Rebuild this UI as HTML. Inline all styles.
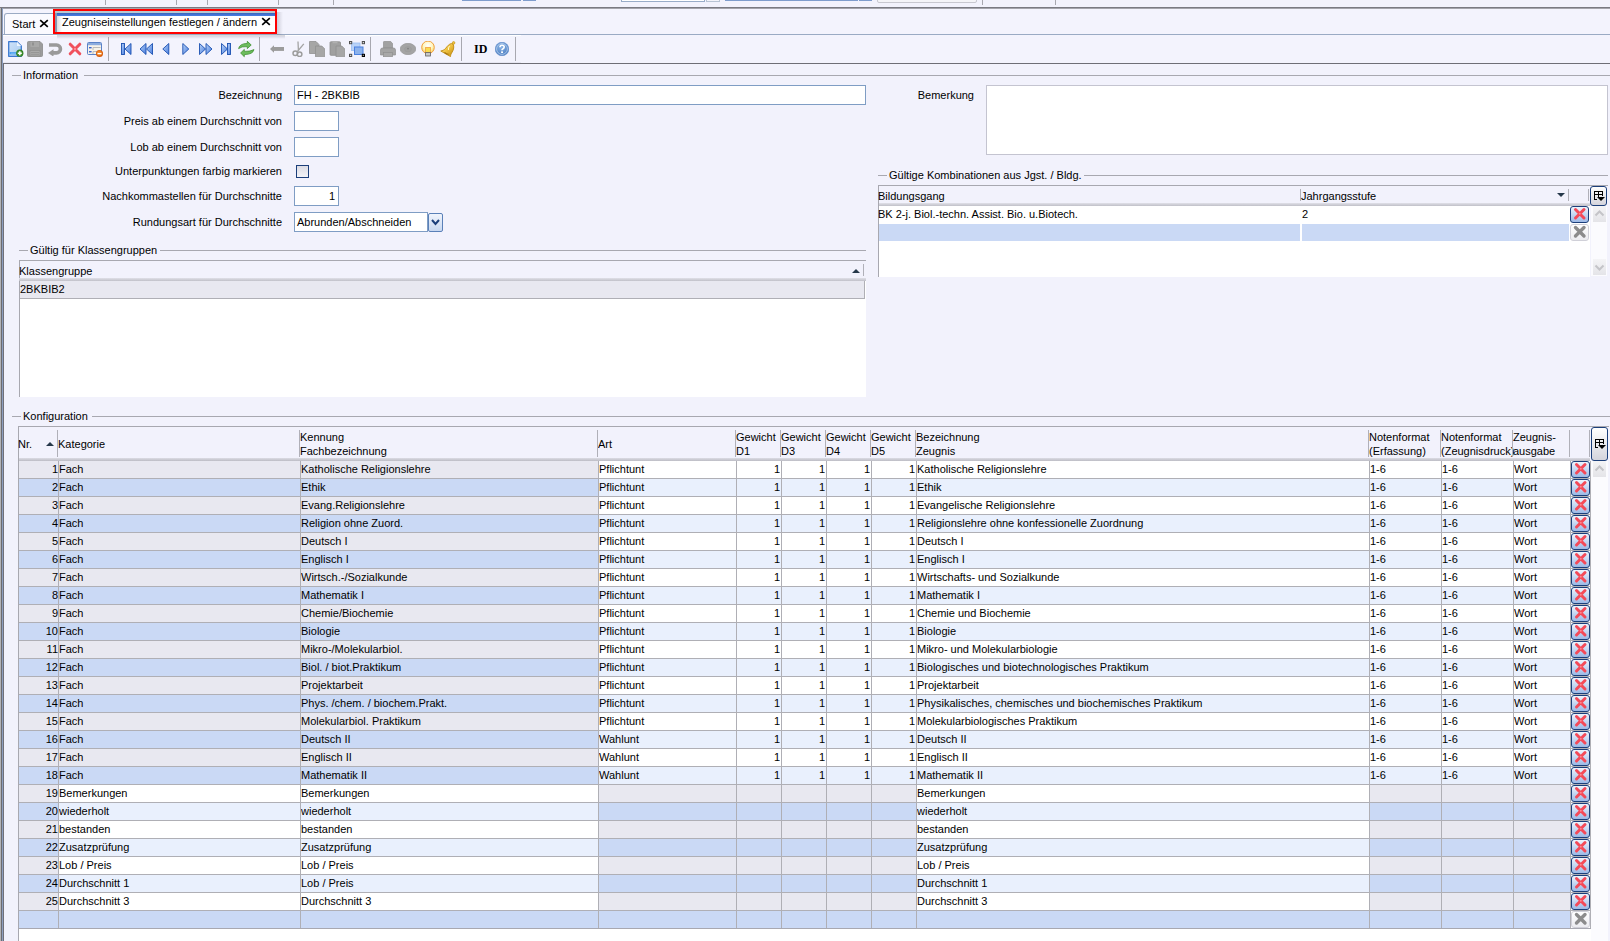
<!DOCTYPE html><html><head><meta charset="utf-8"><style>
*{box-sizing:border-box;margin:0;padding:0}
html,body{width:1610px;height:941px;overflow:hidden;background:#f2f2fc;font-family:"Liberation Sans",sans-serif;font-size:11px;color:#000}
.a{position:absolute}
.t{position:absolute;white-space:nowrap;line-height:13px}
.r{text-align:right}
.hl{position:absolute;height:1px;background:#a0a0a8}
.vl{position:absolute;width:1px}
.inp{position:absolute;background:#fff;border:1px solid #7f9dc4}
.cell{position:absolute;overflow:hidden;white-space:nowrap;line-height:17px;height:17px}
</style></head><body>
<div class="a" style="left:105px;top:0;width:1px;height:5px;background:#a8a8b0"></div>
<div class="a" style="left:176px;top:0;width:1px;height:5px;background:#a8a8b0"></div>
<div class="a" style="left:207px;top:0;width:1px;height:5px;background:#a8a8b0"></div>
<div class="a" style="left:278px;top:0;width:1px;height:5px;background:#a8a8b0"></div>
<div class="a" style="left:333px;top:0;width:1px;height:5px;background:#a8a8b0"></div>
<div class="a" style="left:982px;top:0;width:1px;height:5px;background:#a8a8b0"></div>
<div class="a" style="left:1055px;top:0;width:1px;height:5px;background:#a8a8b0"></div>
<div class="a" style="left:462px;top:0;width:59px;height:1px;background:#7e9ccc"></div>
<div class="a" style="left:523px;top:0;width:13px;height:1px;background:#7e9ccc"></div>
<div class="a" style="left:621px;top:-2px;width:84px;height:4px;border:1px solid #98acc8;background:#fff"></div>
<div class="a" style="left:706px;top:-2px;width:14px;height:4px;border:1px solid #b8c4d4;background:#f4f4fa"></div>
<div class="a" style="left:725px;top:0;width:133px;height:1px;background:#7e9ccc"></div>
<div class="a" style="left:859px;top:0;width:13px;height:1px;background:#7e9ccc"></div>
<div class="a" style="left:877px;top:-3px;width:100px;height:6px;border:1px solid #c8c8d0;border-radius:2px;background:#f4f4f8"></div>
<div class="a" style="left:0;top:7px;width:1610px;height:1px;background:#7a7a82"></div>
<div class="a" style="left:0;top:8px;width:1610px;height:1px;background:#a4a4ac"></div>
<div class="a" style="left:0;top:8px;width:1px;height:933px;background:#b4b4b8"></div>
<div class="a" style="left:1px;top:8px;width:1px;height:933px;background:#6c6c70"></div>
<div class="a" style="left:2px;top:8px;width:1px;height:933px;background:#8c9ec0"></div>
<div class="a" style="left:3px;top:9px;width:1607px;height:25px;background:#f3f3fd"></div>
<div class="a" style="left:3px;top:34px;width:1607px;height:1px;background:#9aaac4"></div>
<div class="a" style="left:4px;top:13px;width:50px;height:21px;border:1px solid #9aaac4;border-bottom:none;border-radius:3px 0 0 0;background:#fafaff"></div>
<div class="t" style="left:12px;top:18px">Start</div>
<svg class="a" style="left:39px;top:19px" width="10" height="9"><path d="M1.2 1.2 L8.8 7.8 M8.8 1.2 L1.2 7.8" stroke="#000" stroke-width="1.7"/></svg>
<div class="a" style="left:55px;top:11px;width:220px;height:21px;background:#fff"></div>
<div class="a" style="left:55px;top:11px;width:220px;height:2px;background:#b8c8d0"></div>
<div class="a" style="left:57px;top:13px;width:218px;height:3px;background:linear-gradient(#3a64b8,#4a80e8)"></div>
<div class="a" style="left:55px;top:13px;width:2px;height:19px;background:#8898b0"></div>
<div class="a" style="left:57px;top:16px;width:5px;height:16px;background:linear-gradient(90deg,#dcdce0,#ffffff)"></div>
<div class="t" style="left:62px;top:16px">Zeugniseinstellungen festlegen / ändern</div>
<svg class="a" style="left:261px;top:17px" width="10" height="9"><path d="M1.2 1.2 L8.8 7.8 M8.8 1.2 L1.2 7.8" stroke="#000" stroke-width="1.7"/></svg>
<div class="a" style="left:277px;top:12px;width:6px;height:23px;background:linear-gradient(90deg,rgba(60,60,80,0.2),rgba(60,60,80,0))"></div>
<div class="a" style="left:53px;top:9px;width:224px;height:25px;border:2px solid #ff0000"></div>
<div class="a" style="left:3px;top:35px;width:1607px;height:28px;background:#f3f3fd"></div>
<div class="a" style="left:3px;top:63px;width:1607px;height:1px;background:#6e6e76"></div>
<div class="a" style="left:3px;top:35px;width:518px;height:1px;background:#ffffff"></div>
<div class="a" style="left:3px;top:62px;width:518px;height:1px;background:#e6e6f2"></div>
<div class="a" style="left:57px;top:35px;width:228px;height:4px;background:linear-gradient(rgba(60,60,80,0.22),rgba(60,60,80,0))"></div>
<div class="a" style="left:108px;top:37px;width:1px;height:24px;background:#a8a8b0"></div>
<div class="a" style="left:259px;top:37px;width:1px;height:24px;background:#a8a8b0"></div>
<div class="a" style="left:370px;top:37px;width:1px;height:24px;background:#a8a8b0"></div>
<div class="a" style="left:461px;top:37px;width:1px;height:24px;background:#a8a8b0"></div>
<div class="a" style="left:515px;top:37px;width:1px;height:24px;background:#a8a8b0"></div>
<svg class="a" style="left:8px;top:41px" width="16" height="16" viewBox="0 0 16 16"><defs><linearGradient id="gd" x1="0" y1="0" x2="1" y2="1"><stop offset="0" stop-color="#cfe2f8"/><stop offset="1" stop-color="#a8cbf0"/></linearGradient></defs><path d="M0.7 0.7 H9 L13.3 5 V15.3 H0.7 Z" fill="url(#gd)" stroke="#3a78d0" stroke-width="1.3" stroke-linejoin="round"/><path d="M9 0.7 V5 H13.3" fill="#eef5fd" stroke="none"/><rect x="1.5" y="11" width="8" height="2.4" fill="#4aa0f0"/><path d="M3 12.2 H8" stroke="#9ad0fa" stroke-width="0.6"/><circle cx="11.8" cy="12.2" r="3.6" fill="#2f7d22"/><circle cx="11.8" cy="12.2" r="2.6" fill="#4a9a3a"/><path d="M11.8 10.2 V14.2 M9.8 12.2 H13.8" stroke="#fff" stroke-width="1.5"/></svg>
<svg class="a" style="left:27px;top:41px" width="16" height="16" viewBox="0 0 16 16"><path d="M0.5 1.5 Q0.5 0.5 1.5 0.5 H13 L15.5 3 V14.5 Q15.5 15.5 14.5 15.5 H1.5 Q0.5 15.5 0.5 14.5 Z" fill="#9c9c9c" stroke="#8a8a8a" stroke-width="0.8"/><rect x="3.5" y="0.8" width="8.5" height="5.2" fill="#a8a8a8"/><rect x="5.5" y="1.5" width="1" height="3" fill="#7a7a7a"/><rect x="3" y="9.5" width="10" height="5.5" fill="#aaaaaa" stroke="#8e8e8e" stroke-width="0.6"/><path d="M4 11.5 H12 M4 13.3 H12" stroke="#8e8e8e" stroke-width="0.7"/></svg>
<svg class="a" style="left:48px;top:40px" width="16" height="16" viewBox="0 0 16 16"><path d="M1 5 H8.5 A3.95 3.95 0 0 1 8.5 12.9 H5" stroke="#9a9a9a" stroke-width="3.6" fill="none"/><path d="M0 12.9 L5.5 9.2 V16.6 Z" fill="#9a9a9a"/></svg>
<svg class="a" style="left:68px;top:42px" width="14" height="14" viewBox="0 0 14 14"><path d="M2.2 2.2 L11.8 11.8 M11.8 2.2 L2.2 11.8" stroke="#f0505c" stroke-width="3" stroke-linecap="round"/><circle cx="7" cy="7" r="1.2" fill="#ff8a92"/></svg>
<svg class="a" style="left:87px;top:42px" width="16" height="16" viewBox="0 0 16 16"><rect x="0.5" y="0.5" width="14" height="12" rx="1" fill="#f6f2ea" stroke="#5a82c8"/><rect x="1" y="1" width="13" height="2.2" fill="#8cacde"/><rect x="2" y="5" width="2.6" height="1.4" fill="#3a64d0"/><rect x="2" y="9" width="2.6" height="1.4" fill="#3a64d0"/><path d="M6 8 V5.5 H13.5 M6 12 V9.5 H10" stroke="#b4b4b4" stroke-width="0.9" fill="none"/><circle cx="12.5" cy="11.5" r="3.5" fill="#d85a08"/><circle cx="12.3" cy="11.1" r="2.6" fill="#f08020"/><rect x="10.5" y="10.9" width="4" height="1.4" fill="#fff"/></svg>
<svg class="a" style="left:121px;top:43px" width="11" height="12" viewBox="0 0 11 12"><defs><linearGradient id="gb" x1="0" y1="0" x2="1" y2="1"><stop offset="0" stop-color="#b8d2f6"/><stop offset="1" stop-color="#4a7ee0"/></linearGradient></defs><rect x="0.5" y="0.5" width="3" height="11" fill="url(#gb)" stroke="#1a4fb0" stroke-width="0.9"/><path d="M4 6 L10 0.5 V11.5 Z" fill="url(#gb)" stroke="#1a4fb0" stroke-width="0.9" stroke-linejoin="round"/></svg>
<svg class="a" style="left:139px;top:43px" width="15" height="12" viewBox="0 0 15 12"><path d="M1 6 L7 0.5 V11.5 Z" fill="url(#gb)" stroke="#1a4fb0" stroke-width="0.9" stroke-linejoin="round"/><path d="M7.5 6 L13.5 0.5 V11.5 Z" fill="url(#gb)" stroke="#1a4fb0" stroke-width="0.9" stroke-linejoin="round"/></svg>
<svg class="a" style="left:162px;top:43px" width="8" height="12" viewBox="0 0 8 12"><path d="M0.8 6 L6.8 0.5 V11.5 Z" fill="url(#gb)" stroke="#1a4fb0" stroke-width="0.9" stroke-linejoin="round"/></svg>
<svg class="a" style="left:182px;top:43px" width="8" height="12" viewBox="0 0 8 12"><path d="M0.8 0.5 L6.8 6 L0.8 11.5 Z" fill="url(#gb)" stroke="#1a4fb0" stroke-width="0.9" stroke-linejoin="round"/></svg>
<svg class="a" style="left:199px;top:43px" width="15" height="12" viewBox="0 0 15 12"><path d="M0.5 0.5 L6.5 6 L0.5 11.5 Z" fill="url(#gb)" stroke="#1a4fb0" stroke-width="0.9" stroke-linejoin="round"/><path d="M7 0.5 L13 6 L7 11.5 Z" fill="url(#gb)" stroke="#1a4fb0" stroke-width="0.9" stroke-linejoin="round"/></svg>
<svg class="a" style="left:221px;top:43px" width="11" height="12" viewBox="0 0 11 12"><path d="M0.5 0.5 L6.5 6 L0.5 11.5 Z" fill="url(#gb)" stroke="#1a4fb0" stroke-width="0.9" stroke-linejoin="round"/><rect x="6.5" y="0.5" width="3" height="11" fill="url(#gb)" stroke="#1a4fb0" stroke-width="0.9"/></svg>
<svg class="a" style="left:238px;top:41px" width="17" height="17" viewBox="0 0 17 17"><path d="M0.6 7.6 Q1.5 2.6 9.3 2.4 L9.3 0.3 L13.2 4 L9.3 7.6 L9.3 5.6 Q3.5 5.2 0.6 7.6 Z" fill="#6cbc5c" stroke="#3f9030" stroke-width="0.8" stroke-linejoin="round"/><path d="M16 8.6 Q15 13.4 6.3 13.6 L6.3 15.7 L2.6 12 L6.3 8.4 L6.3 10.4 Q12.5 10.6 16 8.6 Z" fill="#6cbc5c" stroke="#3f9030" stroke-width="0.8" stroke-linejoin="round"/></svg>
<svg class="a" style="left:270px;top:45px" width="14" height="8" viewBox="0 0 14 8"><path d="M0 4 L4 0.2 V7.8 Z" fill="#9c9c9c"/><rect x="3.5" y="2" width="10.5" height="3.9" fill="#9c9c9c"/></svg>
<svg class="a" style="left:291px;top:41px" width="16" height="16" viewBox="0 0 16 16"><path d="M7 0.5 L7.4 9.5 M12.8 2.8 L6.4 10.5" stroke="#a4a4a4" stroke-width="1.3"/><circle cx="4.3" cy="12.3" r="2.3" stroke="#9c9c9c" stroke-width="1.5" fill="none"/><circle cx="8.6" cy="13.2" r="2.3" stroke="#9c9c9c" stroke-width="1.5" fill="none"/></svg>
<svg class="a" style="left:309px;top:41px" width="16" height="16" viewBox="0 0 16 16"><path d="M0.5 0.5 H7.0 L10.0 3.5 V12.5 H0.5 Z" fill="#a6a6a6" stroke="#909090" stroke-width="0.8" stroke-linejoin="round"/><path d="M6.5 5 H12.8 L15.8 8 V15.8 H6.5 Z" fill="#a6a6a6" stroke="#909090" stroke-width="0.8" stroke-linejoin="round"/></svg>
<svg class="a" style="left:329px;top:41px" width="16" height="16" viewBox="0 0 16 16"><path d="M1 1.5 Q1 0.8 2 0.8 H10.5 Q11.5 0.8 11.5 1.8 V13.5 Q11.5 14.3 10.5 14.3 H2 Q1 14.3 1 13.5 Z" fill="#a0a0a0" stroke="#8c8c8c" stroke-width="0.8"/><rect x="3.5" y="0.3" width="5" height="2" fill="#b0b0b0"/><path d="M7 5 H12.8 L15.8 8 V15.8 H7 Z" fill="#a6a6a6" stroke="#909090" stroke-width="0.8" stroke-linejoin="round"/></svg>
<svg class="a" style="left:349px;top:41px" width="16" height="16" viewBox="0 0 16 16"><rect x="2.5" y="2" width="8.5" height="7.5" fill="#b8d2f8" stroke="#98bcf0" stroke-width="0.8"/><rect x="5.5" y="6" width="8.5" height="7.5" fill="#8cb2ec" stroke="#4a80e0" stroke-width="1"/><g fill="#d8d8d8" stroke="#505050" stroke-width="1"><rect x="0.5" y="0.5" width="2.2" height="2.2"/><rect x="13.3" y="0.5" width="2.2" height="2.2"/><rect x="0.5" y="13.3" width="2.2" height="2.2"/></g><rect x="13.3" y="13.3" width="2.2" height="2.2" fill="#888" stroke="#000" stroke-width="1"/></svg>
<svg class="a" style="left:380px;top:41px" width="16" height="16" viewBox="0 0 16 16"><path d="M3.5 1.2 Q3.5 0.3 4.5 0.3 H10.5 L12.5 2.5 V7 H3.5 Z" fill="#a2a2a2" stroke="#909090" stroke-width="0.7"/><path d="M0.5 9 Q0.5 7 2.5 7 H13.5 Q15.5 7 15.5 9 V14 H0.5 Z" fill="#a4a4a4" stroke="#909090" stroke-width="0.7"/><rect x="3.5" y="11.5" width="9" height="4.2" fill="#a8a8a8" stroke="#909090" stroke-width="0.7"/></svg>
<svg class="a" style="left:400px;top:43px" width="16" height="12" viewBox="0 0 16 12"><ellipse cx="8" cy="6" rx="7.8" ry="5.7" fill="#a4a4a4" stroke="#909090" stroke-width="0.6"/><ellipse cx="8" cy="6.2" rx="3.5" ry="2.6" fill="#a0a0a0" stroke="#999" stroke-width="0.5"/><circle cx="8" cy="5.6" r="0.9" fill="#808080"/></svg>
<svg class="a" style="left:421px;top:41px" width="14" height="16" viewBox="0 0 14 16"><defs><radialGradient id="bl" cx="0.5" cy="0.35" r="0.6"><stop offset="0" stop-color="#ffffff"/><stop offset="0.6" stop-color="#fff6c0"/><stop offset="1" stop-color="#f6d870"/></radialGradient></defs><circle cx="7" cy="6.4" r="6.3" fill="url(#bl)" stroke="#f0a040" stroke-width="1"/><rect x="4.6" y="6.5" width="4.8" height="5" fill="#f8dc50" stroke="#f0a040" stroke-width="0.8"/><rect x="4.6" y="11.5" width="4.8" height="3.5" fill="#c8c8c8" stroke="#606060" stroke-width="0.8"/></svg>
<svg class="a" style="left:440px;top:41px" width="16" height="16" viewBox="0 0 16 16"><defs><linearGradient id="bg2" x1="0" y1="0" x2="1" y2="1"><stop offset="0" stop-color="#fbe890"/><stop offset="0.5" stop-color="#eec040"/><stop offset="1" stop-color="#c08a10"/></linearGradient></defs><path d="M11.5 2.5 C9 3 7.5 5 5.5 7.5 C4 9.2 2.5 9.5 0.8 10 L10.5 15.6 C10.5 14 11.2 12.5 12.2 11 C13.8 8.5 14.2 5.5 13.2 3.2 Z" fill="url(#bg2)" stroke="#c08a10" stroke-width="0.9" stroke-linejoin="round"/><circle cx="13.6" cy="1.9" r="1.3" fill="#f0c840" stroke="#c08a10" stroke-width="0.6"/><path d="M4.5 11.3 Q6.5 13.5 8.5 13.2" stroke="#a07010" stroke-width="1.2" fill="none"/><path d="M9.5 5 Q8 7 8.5 9" stroke="#fff8c0" stroke-width="1" fill="none"/></svg>
<div class="t" style="left:474px;top:42px;font-family:'Liberation Serif',serif;font-weight:bold;font-size:12px;line-height:14px">ID</div>
<svg class="a" style="left:495px;top:42px" width="14" height="14" viewBox="0 0 14 14"><defs><radialGradient id="hp" cx="0.45" cy="0.35" r="0.65"><stop offset="0" stop-color="#8ab4e6"/><stop offset="1" stop-color="#4a7cc0"/></radialGradient></defs><circle cx="7" cy="7" r="6.8" fill="url(#hp)" stroke="#5a88c8" stroke-width="0.6"/><circle cx="7" cy="7" r="5.4" fill="none" stroke="#c8dcf4" stroke-width="0.7"/><path d="M5 5.2 Q5 3.3 7 3.3 Q9.2 3.3 9.2 5.1 Q9.2 6.3 7.8 6.9 Q7 7.3 7 8.3" stroke="#fff" stroke-width="1.6" fill="none"/><rect x="6.1" y="9.4" width="1.9" height="1.6" fill="#fff"/></svg>
<div class="a" style="left:3px;top:64px;width:1px;height:877px;background:#707078"></div>
<div class="a" style="left:12px;top:75px;width:9px;height:1px;background:#a8a8b0"></div>
<div class="t" style="left:23px;top:69px">Information</div>
<div class="a" style="left:84px;top:75px;width:1526px;height:1px;background:#a8a8b0"></div>
<div class="t r" style="right:1328px;top:89px">Bezeichnung</div>
<div class="t r" style="right:1328px;top:115px">Preis ab einem Durchschnitt von</div>
<div class="t r" style="right:1328px;top:141px">Lob ab einem Durchschnitt von</div>
<div class="t r" style="right:1328px;top:165px">Unterpunktungen farbig markieren</div>
<div class="t r" style="right:1328px;top:190px">Nachkommastellen für Durchschnitte</div>
<div class="t r" style="right:1328px;top:216px">Rundungsart für Durchschnitte</div>
<div class="inp" style="left:294px;top:85px;width:572px;height:20px"></div>
<div class="t" style="left:297px;top:89px">FH - 2BKBIB</div>
<div class="inp" style="left:294px;top:111px;width:45px;height:20px"></div>
<div class="inp" style="left:294px;top:137px;width:45px;height:20px"></div>
<div class="a" style="left:296px;top:165px;width:13px;height:13px;border:1px solid #1c3f7a;background:linear-gradient(#dcdce4,#f4f4f8)"></div>
<div class="inp" style="left:294px;top:186px;width:45px;height:20px"></div>
<div class="t" style="left:329px;top:190px">1</div>
<div class="inp" style="left:294px;top:212px;width:134px;height:20px"></div>
<div class="t" style="left:297px;top:216px">Abrunden/Abschneiden</div>
<div class="a" style="left:428px;top:213px;width:15px;height:19px;border:1px solid #5a80b8;border-radius:2px;background:linear-gradient(#f0f4fc,#c8d8f0)"></div>
<svg class="a" style="left:430px;top:217px" width="11" height="10"><path d="M2 3 L5.5 7 L9 3" stroke="#1c3f7a" stroke-width="2" fill="none"/></svg>
<div class="t r" style="right:636px;top:89px">Bemerkung</div>
<div class="a" style="left:986px;top:85px;width:622px;height:70px;border:1px solid #c4c4d0;background:#fff"></div>
<div class="a" style="left:19px;top:250px;width:9px;height:1px;background:#a8a8b0"></div>
<div class="t" style="left:30px;top:244px">Gültig für Klassengruppen</div>
<div class="a" style="left:160px;top:250px;width:706px;height:1px;background:#a8a8b0"></div>
<div class="a" style="left:19px;top:260px;width:847px;height:137px;background:#fff"></div>
<div class="a" style="left:19px;top:260px;width:847px;height:21px;background:#f2f2fc;border-top:1px solid #a8a8b0;border-left:1px solid #a8a8b0"></div>
<div class="a" style="left:19px;top:278px;width:847px;height:3px;background:linear-gradient(#e0e0e8,#c0c0c8)"></div>
<div class="t" style="left:19px;top:265px">Klassengruppe</div>
<div class="a" style="left:863px;top:264px;width:1px;height:12px;background:#b0b0b8"></div>
<svg class="a" style="left:851px;top:268px" width="10" height="6"><path d="M1 5 L5 1 L9 5 Z" fill="#26384a"/></svg>
<div class="a" style="left:19px;top:281px;width:846px;height:18px;background:#e8e8f0;border-bottom:1px solid #afafb5;border-right:1px solid #afafb5"></div>
<div class="t" style="left:20px;top:283px">2BKBIB2</div>
<div class="a" style="left:19px;top:281px;width:1px;height:116px;background:#a8a8b0"></div>
<div class="a" style="left:878px;top:175px;width:9px;height:1px;background:#a8a8b0"></div>
<div class="t" style="left:889px;top:169px">Gültige Kombinationen aus Jgst. / Bldg.</div>
<div class="a" style="left:1084px;top:175px;width:524px;height:1px;background:#a8a8b0"></div>
<div class="a" style="left:878px;top:185px;width:712px;height:92px;background:#fff"></div>
<div class="a" style="left:878px;top:185px;width:730px;height:21px;background:#f2f2fc;border-top:1px solid #a8a8b0"></div>
<div class="a" style="left:878px;top:203px;width:712px;height:3px;background:linear-gradient(#e0e0e8,#c0c0c8)"></div>
<div class="a" style="left:878px;top:185px;width:1px;height:92px;background:#a8a8b0"></div>
<div class="t" style="left:878px;top:190px">Bildungsgang</div>
<div class="a" style="left:1300px;top:189px;width:1px;height:12px;background:#b0b0b8"></div>
<div class="t" style="left:1301px;top:190px">Jahrgangsstufe</div>
<svg class="a" style="left:1556px;top:192px" width="10" height="6"><path d="M1 1 L5 5 L9 1 Z" fill="#26384a"/></svg>
<div class="a" style="left:1568px;top:189px;width:1px;height:12px;background:#b0b0b8"></div>
<div class="a" style="left:1588px;top:189px;width:1px;height:12px;background:#b0b0b8"></div>
<div class="t" style="left:878px;top:208px">BK 2-j. Biol.-techn. Assist. Bio. u.Biotech.</div>
<div class="t" style="left:1302px;top:208px">2</div>
<div class="a" style="left:879px;top:224px;width:421px;height:17px;background:#cad9f5"></div>
<div class="a" style="left:1302px;top:224px;width:267px;height:17px;background:#cad9f5"></div>
<div class="a" style="left:1570px;top:206px;width:19px;height:17px;border:1px solid #1c3f7a;border-radius:3px;background:linear-gradient(#eef4fd,#9cb9e6)"></div><svg class="a" style="left:1570px;top:206px" width="19" height="17"><path d="M5.5 3.5 L14 12 M14 3.5 L5.5 12" stroke="#f44a58" stroke-width="3" stroke-linecap="round"/><circle cx="9.75" cy="7.75" r="1" fill="#ff8890"/></svg>
<div class="a" style="left:1570px;top:224px;width:19px;height:17px;border:1px solid #d0d0d8;border-radius:3px;background:linear-gradient(#ffffff,#ececf0)"></div><svg class="a" style="left:1570px;top:224px" width="19" height="17"><path d="M5.5 3.5 L14 12 M14 3.5 L5.5 12" stroke="#8c8c8c" stroke-width="3.4" stroke-linecap="round"/></svg>
<div class="a" style="left:1590px;top:186px;width:17px;height:20px;border:1px solid #1c3f7a;border-radius:3px;background:linear-gradient(#ffffff,#d4d4dc)"></div><svg class="a" style="left:1594px;top:191px" width="12" height="11" shape-rendering="crispEdges"><rect x="0" y="0" width="9" height="1" fill="#000"/><rect x="0" y="3" width="9" height="1" fill="#000"/><rect x="0" y="0" width="1" height="9" fill="#000"/><rect x="4" y="0" width="1" height="6" fill="#000"/><rect x="8" y="0" width="1" height="5" fill="#000"/><rect x="0" y="8" width="3" height="1" fill="#000"/><path d="M3 6 H11 L7 10 Z" fill="#000" shape-rendering="auto"/></svg>
<div class="a" style="left:1591px;top:206px;width:16px;height:70px;background:#fbfbfe"></div>
<div class="a" style="left:1593px;top:206px;width:13px;height:16px;background:linear-gradient(#f4f4f6,#e4e4e8)"></div><svg class="a" style="left:1593px;top:206px" width="13" height="16"><path d="M2.5 9.5 L6.5 5.5 L10.5 9.5" stroke="#c4c4c8" stroke-width="2" fill="none"/></svg>
<div class="a" style="left:1593px;top:259px;width:13px;height:16px;background:linear-gradient(#f4f4f6,#e4e4e8)"></div><svg class="a" style="left:1593px;top:259px" width="13" height="16"><path d="M2.5 6.5 L6.5 10.5 L10.5 6.5" stroke="#c4c4c8" stroke-width="2" fill="none"/></svg>
<div class="a" style="left:12px;top:416px;width:9px;height:1px;background:#a8a8b0"></div>
<div class="t" style="left:23px;top:410px">Konfiguration</div>
<div class="a" style="left:92px;top:416px;width:1518px;height:1px;background:#a8a8b0"></div>
<div class="a" style="left:18px;top:426px;width:1573px;height:515px;background:#fff"></div>
<div class="a" style="left:18px;top:426px;width:1573px;height:35px;background:#f2f2fc"></div>
<div class="a" style="left:18px;top:426px;width:1591px;height:1px;background:#a8a8b0"></div>
<div class="a" style="left:18px;top:458px;width:1572px;height:3px;background:linear-gradient(#dcdce4,#bcbcc4)"></div>
<div class="a" style="left:18px;top:426px;width:1px;height:515px;background:#a8a8b0"></div>
<div class="t" style="left:18px;top:438px">Nr.</div>
<div class="t" style="left:58px;top:438px">Kategorie</div>
<div class="t" style="left:300px;top:431px">Kennung</div>
<div class="t" style="left:300px;top:445px">Fachbezeichnung</div>
<div class="t" style="left:598px;top:438px">Art</div>
<div class="t" style="left:736px;top:431px">Gewicht</div>
<div class="t" style="left:736px;top:445px">D1</div>
<div class="t" style="left:781px;top:431px">Gewicht</div>
<div class="t" style="left:781px;top:445px">D3</div>
<div class="t" style="left:826px;top:431px">Gewicht</div>
<div class="t" style="left:826px;top:445px">D4</div>
<div class="t" style="left:871px;top:431px">Gewicht</div>
<div class="t" style="left:871px;top:445px">D5</div>
<div class="t" style="left:916px;top:431px">Bezeichnung</div>
<div class="t" style="left:916px;top:445px">Zeugnis</div>
<div class="t" style="left:1369px;top:431px">Notenformat</div>
<div class="t" style="left:1369px;top:445px">(Erfassung)</div>
<div class="t" style="left:1441px;top:431px">Notenformat</div>
<div class="t" style="left:1441px;top:445px">(Zeugnisdruck)</div>
<div class="t" style="left:1513px;top:431px">Zeugnis-</div>
<div class="t" style="left:1513px;top:445px">ausgabe</div>
<div class="a" style="left:57px;top:430px;width:1px;height:27px;background:#b0b0b8"></div>
<div class="a" style="left:299px;top:430px;width:1px;height:27px;background:#b0b0b8"></div>
<div class="a" style="left:597px;top:430px;width:1px;height:27px;background:#b0b0b8"></div>
<div class="a" style="left:735px;top:430px;width:1px;height:27px;background:#b0b0b8"></div>
<div class="a" style="left:780px;top:430px;width:1px;height:27px;background:#b0b0b8"></div>
<div class="a" style="left:825px;top:430px;width:1px;height:27px;background:#b0b0b8"></div>
<div class="a" style="left:870px;top:430px;width:1px;height:27px;background:#b0b0b8"></div>
<div class="a" style="left:915px;top:430px;width:1px;height:27px;background:#b0b0b8"></div>
<div class="a" style="left:1368px;top:430px;width:1px;height:27px;background:#b0b0b8"></div>
<div class="a" style="left:1440px;top:430px;width:1px;height:27px;background:#b0b0b8"></div>
<div class="a" style="left:1512px;top:430px;width:1px;height:27px;background:#b0b0b8"></div>
<div class="a" style="left:1569px;top:430px;width:1px;height:27px;background:#b0b0b8"></div>
<div class="a" style="left:1589px;top:430px;width:1px;height:27px;background:#b0b0b8"></div>
<svg class="a" style="left:45px;top:441px" width="10" height="6"><path d="M1 5 L5 1 L9 5 Z" fill="#26384a"/></svg>
<div class="a" style="left:1591px;top:427px;width:17px;height:34px;border:1px solid #1c3f7a;border-radius:3px;background:linear-gradient(#ffffff,#d4d4dc)"></div><svg class="a" style="left:1595px;top:439px" width="12" height="11" shape-rendering="crispEdges"><rect x="0" y="0" width="9" height="1" fill="#000"/><rect x="0" y="3" width="9" height="1" fill="#000"/><rect x="0" y="0" width="1" height="9" fill="#000"/><rect x="4" y="0" width="1" height="6" fill="#000"/><rect x="8" y="0" width="1" height="5" fill="#000"/><rect x="0" y="8" width="3" height="1" fill="#000"/><path d="M3 6 H11 L7 10 Z" fill="#000" shape-rendering="auto"/></svg>
<div class="a" style="left:19px;top:461px;width:39px;height:17px;background:#e8e8f0"></div>
<div class="a" style="left:59px;top:461px;width:241px;height:17px;background:#e8e8f0"></div>
<div class="a" style="left:301px;top:461px;width:297px;height:17px;background:#e8e8f0"></div>
<div class="a" style="left:599px;top:461px;width:137px;height:17px;background:#ffffff"></div>
<div class="a" style="left:737px;top:461px;width:44px;height:17px;background:#ffffff"></div>
<div class="a" style="left:782px;top:461px;width:44px;height:17px;background:#ffffff"></div>
<div class="a" style="left:827px;top:461px;width:44px;height:17px;background:#ffffff"></div>
<div class="a" style="left:872px;top:461px;width:44px;height:17px;background:#ffffff"></div>
<div class="a" style="left:917px;top:461px;width:452px;height:17px;background:#ffffff"></div>
<div class="a" style="left:1370px;top:461px;width:71px;height:17px;background:#ffffff"></div>
<div class="a" style="left:1442px;top:461px;width:71px;height:17px;background:#ffffff"></div>
<div class="a" style="left:1514px;top:461px;width:56px;height:17px;background:#ffffff"></div>
<div class="a" style="left:19px;top:478px;width:1571px;height:1px;background:#afafb5"></div>
<div class="cell r" style="left:19px;top:461px;width:39px">1</div>
<div class="cell" style="left:59px;top:461px;width:239px">Fach</div>
<div class="cell" style="left:301px;top:461px;width:295px">Katholische Religionslehre</div>
<div class="cell" style="left:599px;top:461px;width:135px">Pflichtunt</div>
<div class="cell r" style="left:741px;top:461px;width:39px">1</div>
<div class="cell r" style="left:786px;top:461px;width:39px">1</div>
<div class="cell r" style="left:831px;top:461px;width:39px">1</div>
<div class="cell r" style="left:876px;top:461px;width:39px">1</div>
<div class="cell" style="left:1370px;top:461px;width:69px">1-6</div>
<div class="cell" style="left:1442px;top:461px;width:69px">1-6</div>
<div class="cell" style="left:1514px;top:461px;width:55px">Wort</div>
<div class="cell" style="left:917px;top:461px;width:450px">Katholische Religionslehre</div>
<div class="a" style="left:1571px;top:461px;width:19px;height:17px;border:1px solid #1c3f7a;border-radius:3px;background:linear-gradient(#eef4fd,#9cb9e6)"></div><svg class="a" style="left:1571px;top:461px" width="19" height="17"><path d="M5.5 3.5 L14 12 M14 3.5 L5.5 12" stroke="#f44a58" stroke-width="3" stroke-linecap="round"/><circle cx="9.75" cy="7.75" r="1" fill="#ff8890"/></svg>
<div class="a" style="left:19px;top:479px;width:39px;height:17px;background:#cad9f5"></div>
<div class="a" style="left:59px;top:479px;width:241px;height:17px;background:#cad9f5"></div>
<div class="a" style="left:301px;top:479px;width:297px;height:17px;background:#cad9f5"></div>
<div class="a" style="left:599px;top:479px;width:137px;height:17px;background:#e9f0fd"></div>
<div class="a" style="left:737px;top:479px;width:44px;height:17px;background:#e9f0fd"></div>
<div class="a" style="left:782px;top:479px;width:44px;height:17px;background:#e9f0fd"></div>
<div class="a" style="left:827px;top:479px;width:44px;height:17px;background:#e9f0fd"></div>
<div class="a" style="left:872px;top:479px;width:44px;height:17px;background:#e9f0fd"></div>
<div class="a" style="left:917px;top:479px;width:452px;height:17px;background:#e9f0fd"></div>
<div class="a" style="left:1370px;top:479px;width:71px;height:17px;background:#e9f0fd"></div>
<div class="a" style="left:1442px;top:479px;width:71px;height:17px;background:#e9f0fd"></div>
<div class="a" style="left:1514px;top:479px;width:56px;height:17px;background:#e9f0fd"></div>
<div class="a" style="left:19px;top:496px;width:1571px;height:1px;background:#afafb5"></div>
<div class="cell r" style="left:19px;top:479px;width:39px">2</div>
<div class="cell" style="left:59px;top:479px;width:239px">Fach</div>
<div class="cell" style="left:301px;top:479px;width:295px">Ethik</div>
<div class="cell" style="left:599px;top:479px;width:135px">Pflichtunt</div>
<div class="cell r" style="left:741px;top:479px;width:39px">1</div>
<div class="cell r" style="left:786px;top:479px;width:39px">1</div>
<div class="cell r" style="left:831px;top:479px;width:39px">1</div>
<div class="cell r" style="left:876px;top:479px;width:39px">1</div>
<div class="cell" style="left:1370px;top:479px;width:69px">1-6</div>
<div class="cell" style="left:1442px;top:479px;width:69px">1-6</div>
<div class="cell" style="left:1514px;top:479px;width:55px">Wort</div>
<div class="cell" style="left:917px;top:479px;width:450px">Ethik</div>
<div class="a" style="left:1571px;top:479px;width:19px;height:17px;border:1px solid #1c3f7a;border-radius:3px;background:linear-gradient(#eef4fd,#9cb9e6)"></div><svg class="a" style="left:1571px;top:479px" width="19" height="17"><path d="M5.5 3.5 L14 12 M14 3.5 L5.5 12" stroke="#f44a58" stroke-width="3" stroke-linecap="round"/><circle cx="9.75" cy="7.75" r="1" fill="#ff8890"/></svg>
<div class="a" style="left:19px;top:497px;width:39px;height:17px;background:#e8e8f0"></div>
<div class="a" style="left:59px;top:497px;width:241px;height:17px;background:#e8e8f0"></div>
<div class="a" style="left:301px;top:497px;width:297px;height:17px;background:#e8e8f0"></div>
<div class="a" style="left:599px;top:497px;width:137px;height:17px;background:#ffffff"></div>
<div class="a" style="left:737px;top:497px;width:44px;height:17px;background:#ffffff"></div>
<div class="a" style="left:782px;top:497px;width:44px;height:17px;background:#ffffff"></div>
<div class="a" style="left:827px;top:497px;width:44px;height:17px;background:#ffffff"></div>
<div class="a" style="left:872px;top:497px;width:44px;height:17px;background:#ffffff"></div>
<div class="a" style="left:917px;top:497px;width:452px;height:17px;background:#ffffff"></div>
<div class="a" style="left:1370px;top:497px;width:71px;height:17px;background:#ffffff"></div>
<div class="a" style="left:1442px;top:497px;width:71px;height:17px;background:#ffffff"></div>
<div class="a" style="left:1514px;top:497px;width:56px;height:17px;background:#ffffff"></div>
<div class="a" style="left:19px;top:514px;width:1571px;height:1px;background:#afafb5"></div>
<div class="cell r" style="left:19px;top:497px;width:39px">3</div>
<div class="cell" style="left:59px;top:497px;width:239px">Fach</div>
<div class="cell" style="left:301px;top:497px;width:295px">Evang.Religionslehre</div>
<div class="cell" style="left:599px;top:497px;width:135px">Pflichtunt</div>
<div class="cell r" style="left:741px;top:497px;width:39px">1</div>
<div class="cell r" style="left:786px;top:497px;width:39px">1</div>
<div class="cell r" style="left:831px;top:497px;width:39px">1</div>
<div class="cell r" style="left:876px;top:497px;width:39px">1</div>
<div class="cell" style="left:1370px;top:497px;width:69px">1-6</div>
<div class="cell" style="left:1442px;top:497px;width:69px">1-6</div>
<div class="cell" style="left:1514px;top:497px;width:55px">Wort</div>
<div class="cell" style="left:917px;top:497px;width:450px">Evangelische Religionslehre</div>
<div class="a" style="left:1571px;top:497px;width:19px;height:17px;border:1px solid #1c3f7a;border-radius:3px;background:linear-gradient(#eef4fd,#9cb9e6)"></div><svg class="a" style="left:1571px;top:497px" width="19" height="17"><path d="M5.5 3.5 L14 12 M14 3.5 L5.5 12" stroke="#f44a58" stroke-width="3" stroke-linecap="round"/><circle cx="9.75" cy="7.75" r="1" fill="#ff8890"/></svg>
<div class="a" style="left:19px;top:515px;width:39px;height:17px;background:#cad9f5"></div>
<div class="a" style="left:59px;top:515px;width:241px;height:17px;background:#cad9f5"></div>
<div class="a" style="left:301px;top:515px;width:297px;height:17px;background:#cad9f5"></div>
<div class="a" style="left:599px;top:515px;width:137px;height:17px;background:#e9f0fd"></div>
<div class="a" style="left:737px;top:515px;width:44px;height:17px;background:#e9f0fd"></div>
<div class="a" style="left:782px;top:515px;width:44px;height:17px;background:#e9f0fd"></div>
<div class="a" style="left:827px;top:515px;width:44px;height:17px;background:#e9f0fd"></div>
<div class="a" style="left:872px;top:515px;width:44px;height:17px;background:#e9f0fd"></div>
<div class="a" style="left:917px;top:515px;width:452px;height:17px;background:#e9f0fd"></div>
<div class="a" style="left:1370px;top:515px;width:71px;height:17px;background:#e9f0fd"></div>
<div class="a" style="left:1442px;top:515px;width:71px;height:17px;background:#e9f0fd"></div>
<div class="a" style="left:1514px;top:515px;width:56px;height:17px;background:#e9f0fd"></div>
<div class="a" style="left:19px;top:532px;width:1571px;height:1px;background:#afafb5"></div>
<div class="cell r" style="left:19px;top:515px;width:39px">4</div>
<div class="cell" style="left:59px;top:515px;width:239px">Fach</div>
<div class="cell" style="left:301px;top:515px;width:295px">Religion ohne Zuord.</div>
<div class="cell" style="left:599px;top:515px;width:135px">Pflichtunt</div>
<div class="cell r" style="left:741px;top:515px;width:39px">1</div>
<div class="cell r" style="left:786px;top:515px;width:39px">1</div>
<div class="cell r" style="left:831px;top:515px;width:39px">1</div>
<div class="cell r" style="left:876px;top:515px;width:39px">1</div>
<div class="cell" style="left:1370px;top:515px;width:69px">1-6</div>
<div class="cell" style="left:1442px;top:515px;width:69px">1-6</div>
<div class="cell" style="left:1514px;top:515px;width:55px">Wort</div>
<div class="cell" style="left:917px;top:515px;width:450px">Religionslehre ohne konfessionelle Zuordnung</div>
<div class="a" style="left:1571px;top:515px;width:19px;height:17px;border:1px solid #1c3f7a;border-radius:3px;background:linear-gradient(#eef4fd,#9cb9e6)"></div><svg class="a" style="left:1571px;top:515px" width="19" height="17"><path d="M5.5 3.5 L14 12 M14 3.5 L5.5 12" stroke="#f44a58" stroke-width="3" stroke-linecap="round"/><circle cx="9.75" cy="7.75" r="1" fill="#ff8890"/></svg>
<div class="a" style="left:19px;top:533px;width:39px;height:17px;background:#e8e8f0"></div>
<div class="a" style="left:59px;top:533px;width:241px;height:17px;background:#e8e8f0"></div>
<div class="a" style="left:301px;top:533px;width:297px;height:17px;background:#e8e8f0"></div>
<div class="a" style="left:599px;top:533px;width:137px;height:17px;background:#ffffff"></div>
<div class="a" style="left:737px;top:533px;width:44px;height:17px;background:#ffffff"></div>
<div class="a" style="left:782px;top:533px;width:44px;height:17px;background:#ffffff"></div>
<div class="a" style="left:827px;top:533px;width:44px;height:17px;background:#ffffff"></div>
<div class="a" style="left:872px;top:533px;width:44px;height:17px;background:#ffffff"></div>
<div class="a" style="left:917px;top:533px;width:452px;height:17px;background:#ffffff"></div>
<div class="a" style="left:1370px;top:533px;width:71px;height:17px;background:#ffffff"></div>
<div class="a" style="left:1442px;top:533px;width:71px;height:17px;background:#ffffff"></div>
<div class="a" style="left:1514px;top:533px;width:56px;height:17px;background:#ffffff"></div>
<div class="a" style="left:19px;top:550px;width:1571px;height:1px;background:#afafb5"></div>
<div class="cell r" style="left:19px;top:533px;width:39px">5</div>
<div class="cell" style="left:59px;top:533px;width:239px">Fach</div>
<div class="cell" style="left:301px;top:533px;width:295px">Deutsch I</div>
<div class="cell" style="left:599px;top:533px;width:135px">Pflichtunt</div>
<div class="cell r" style="left:741px;top:533px;width:39px">1</div>
<div class="cell r" style="left:786px;top:533px;width:39px">1</div>
<div class="cell r" style="left:831px;top:533px;width:39px">1</div>
<div class="cell r" style="left:876px;top:533px;width:39px">1</div>
<div class="cell" style="left:1370px;top:533px;width:69px">1-6</div>
<div class="cell" style="left:1442px;top:533px;width:69px">1-6</div>
<div class="cell" style="left:1514px;top:533px;width:55px">Wort</div>
<div class="cell" style="left:917px;top:533px;width:450px">Deutsch I</div>
<div class="a" style="left:1571px;top:533px;width:19px;height:17px;border:1px solid #1c3f7a;border-radius:3px;background:linear-gradient(#eef4fd,#9cb9e6)"></div><svg class="a" style="left:1571px;top:533px" width="19" height="17"><path d="M5.5 3.5 L14 12 M14 3.5 L5.5 12" stroke="#f44a58" stroke-width="3" stroke-linecap="round"/><circle cx="9.75" cy="7.75" r="1" fill="#ff8890"/></svg>
<div class="a" style="left:19px;top:551px;width:39px;height:17px;background:#cad9f5"></div>
<div class="a" style="left:59px;top:551px;width:241px;height:17px;background:#cad9f5"></div>
<div class="a" style="left:301px;top:551px;width:297px;height:17px;background:#cad9f5"></div>
<div class="a" style="left:599px;top:551px;width:137px;height:17px;background:#e9f0fd"></div>
<div class="a" style="left:737px;top:551px;width:44px;height:17px;background:#e9f0fd"></div>
<div class="a" style="left:782px;top:551px;width:44px;height:17px;background:#e9f0fd"></div>
<div class="a" style="left:827px;top:551px;width:44px;height:17px;background:#e9f0fd"></div>
<div class="a" style="left:872px;top:551px;width:44px;height:17px;background:#e9f0fd"></div>
<div class="a" style="left:917px;top:551px;width:452px;height:17px;background:#e9f0fd"></div>
<div class="a" style="left:1370px;top:551px;width:71px;height:17px;background:#e9f0fd"></div>
<div class="a" style="left:1442px;top:551px;width:71px;height:17px;background:#e9f0fd"></div>
<div class="a" style="left:1514px;top:551px;width:56px;height:17px;background:#e9f0fd"></div>
<div class="a" style="left:19px;top:568px;width:1571px;height:1px;background:#afafb5"></div>
<div class="cell r" style="left:19px;top:551px;width:39px">6</div>
<div class="cell" style="left:59px;top:551px;width:239px">Fach</div>
<div class="cell" style="left:301px;top:551px;width:295px">Englisch I</div>
<div class="cell" style="left:599px;top:551px;width:135px">Pflichtunt</div>
<div class="cell r" style="left:741px;top:551px;width:39px">1</div>
<div class="cell r" style="left:786px;top:551px;width:39px">1</div>
<div class="cell r" style="left:831px;top:551px;width:39px">1</div>
<div class="cell r" style="left:876px;top:551px;width:39px">1</div>
<div class="cell" style="left:1370px;top:551px;width:69px">1-6</div>
<div class="cell" style="left:1442px;top:551px;width:69px">1-6</div>
<div class="cell" style="left:1514px;top:551px;width:55px">Wort</div>
<div class="cell" style="left:917px;top:551px;width:450px">Englisch I</div>
<div class="a" style="left:1571px;top:551px;width:19px;height:17px;border:1px solid #1c3f7a;border-radius:3px;background:linear-gradient(#eef4fd,#9cb9e6)"></div><svg class="a" style="left:1571px;top:551px" width="19" height="17"><path d="M5.5 3.5 L14 12 M14 3.5 L5.5 12" stroke="#f44a58" stroke-width="3" stroke-linecap="round"/><circle cx="9.75" cy="7.75" r="1" fill="#ff8890"/></svg>
<div class="a" style="left:19px;top:569px;width:39px;height:17px;background:#e8e8f0"></div>
<div class="a" style="left:59px;top:569px;width:241px;height:17px;background:#e8e8f0"></div>
<div class="a" style="left:301px;top:569px;width:297px;height:17px;background:#e8e8f0"></div>
<div class="a" style="left:599px;top:569px;width:137px;height:17px;background:#ffffff"></div>
<div class="a" style="left:737px;top:569px;width:44px;height:17px;background:#ffffff"></div>
<div class="a" style="left:782px;top:569px;width:44px;height:17px;background:#ffffff"></div>
<div class="a" style="left:827px;top:569px;width:44px;height:17px;background:#ffffff"></div>
<div class="a" style="left:872px;top:569px;width:44px;height:17px;background:#ffffff"></div>
<div class="a" style="left:917px;top:569px;width:452px;height:17px;background:#ffffff"></div>
<div class="a" style="left:1370px;top:569px;width:71px;height:17px;background:#ffffff"></div>
<div class="a" style="left:1442px;top:569px;width:71px;height:17px;background:#ffffff"></div>
<div class="a" style="left:1514px;top:569px;width:56px;height:17px;background:#ffffff"></div>
<div class="a" style="left:19px;top:586px;width:1571px;height:1px;background:#afafb5"></div>
<div class="cell r" style="left:19px;top:569px;width:39px">7</div>
<div class="cell" style="left:59px;top:569px;width:239px">Fach</div>
<div class="cell" style="left:301px;top:569px;width:295px">Wirtsch.-/Sozialkunde</div>
<div class="cell" style="left:599px;top:569px;width:135px">Pflichtunt</div>
<div class="cell r" style="left:741px;top:569px;width:39px">1</div>
<div class="cell r" style="left:786px;top:569px;width:39px">1</div>
<div class="cell r" style="left:831px;top:569px;width:39px">1</div>
<div class="cell r" style="left:876px;top:569px;width:39px">1</div>
<div class="cell" style="left:1370px;top:569px;width:69px">1-6</div>
<div class="cell" style="left:1442px;top:569px;width:69px">1-6</div>
<div class="cell" style="left:1514px;top:569px;width:55px">Wort</div>
<div class="cell" style="left:917px;top:569px;width:450px">Wirtschafts- und Sozialkunde</div>
<div class="a" style="left:1571px;top:569px;width:19px;height:17px;border:1px solid #1c3f7a;border-radius:3px;background:linear-gradient(#eef4fd,#9cb9e6)"></div><svg class="a" style="left:1571px;top:569px" width="19" height="17"><path d="M5.5 3.5 L14 12 M14 3.5 L5.5 12" stroke="#f44a58" stroke-width="3" stroke-linecap="round"/><circle cx="9.75" cy="7.75" r="1" fill="#ff8890"/></svg>
<div class="a" style="left:19px;top:587px;width:39px;height:17px;background:#cad9f5"></div>
<div class="a" style="left:59px;top:587px;width:241px;height:17px;background:#cad9f5"></div>
<div class="a" style="left:301px;top:587px;width:297px;height:17px;background:#cad9f5"></div>
<div class="a" style="left:599px;top:587px;width:137px;height:17px;background:#e9f0fd"></div>
<div class="a" style="left:737px;top:587px;width:44px;height:17px;background:#e9f0fd"></div>
<div class="a" style="left:782px;top:587px;width:44px;height:17px;background:#e9f0fd"></div>
<div class="a" style="left:827px;top:587px;width:44px;height:17px;background:#e9f0fd"></div>
<div class="a" style="left:872px;top:587px;width:44px;height:17px;background:#e9f0fd"></div>
<div class="a" style="left:917px;top:587px;width:452px;height:17px;background:#e9f0fd"></div>
<div class="a" style="left:1370px;top:587px;width:71px;height:17px;background:#e9f0fd"></div>
<div class="a" style="left:1442px;top:587px;width:71px;height:17px;background:#e9f0fd"></div>
<div class="a" style="left:1514px;top:587px;width:56px;height:17px;background:#e9f0fd"></div>
<div class="a" style="left:19px;top:604px;width:1571px;height:1px;background:#afafb5"></div>
<div class="cell r" style="left:19px;top:587px;width:39px">8</div>
<div class="cell" style="left:59px;top:587px;width:239px">Fach</div>
<div class="cell" style="left:301px;top:587px;width:295px">Mathematik I</div>
<div class="cell" style="left:599px;top:587px;width:135px">Pflichtunt</div>
<div class="cell r" style="left:741px;top:587px;width:39px">1</div>
<div class="cell r" style="left:786px;top:587px;width:39px">1</div>
<div class="cell r" style="left:831px;top:587px;width:39px">1</div>
<div class="cell r" style="left:876px;top:587px;width:39px">1</div>
<div class="cell" style="left:1370px;top:587px;width:69px">1-6</div>
<div class="cell" style="left:1442px;top:587px;width:69px">1-6</div>
<div class="cell" style="left:1514px;top:587px;width:55px">Wort</div>
<div class="cell" style="left:917px;top:587px;width:450px">Mathematik I</div>
<div class="a" style="left:1571px;top:587px;width:19px;height:17px;border:1px solid #1c3f7a;border-radius:3px;background:linear-gradient(#eef4fd,#9cb9e6)"></div><svg class="a" style="left:1571px;top:587px" width="19" height="17"><path d="M5.5 3.5 L14 12 M14 3.5 L5.5 12" stroke="#f44a58" stroke-width="3" stroke-linecap="round"/><circle cx="9.75" cy="7.75" r="1" fill="#ff8890"/></svg>
<div class="a" style="left:19px;top:605px;width:39px;height:17px;background:#e8e8f0"></div>
<div class="a" style="left:59px;top:605px;width:241px;height:17px;background:#e8e8f0"></div>
<div class="a" style="left:301px;top:605px;width:297px;height:17px;background:#e8e8f0"></div>
<div class="a" style="left:599px;top:605px;width:137px;height:17px;background:#ffffff"></div>
<div class="a" style="left:737px;top:605px;width:44px;height:17px;background:#ffffff"></div>
<div class="a" style="left:782px;top:605px;width:44px;height:17px;background:#ffffff"></div>
<div class="a" style="left:827px;top:605px;width:44px;height:17px;background:#ffffff"></div>
<div class="a" style="left:872px;top:605px;width:44px;height:17px;background:#ffffff"></div>
<div class="a" style="left:917px;top:605px;width:452px;height:17px;background:#ffffff"></div>
<div class="a" style="left:1370px;top:605px;width:71px;height:17px;background:#ffffff"></div>
<div class="a" style="left:1442px;top:605px;width:71px;height:17px;background:#ffffff"></div>
<div class="a" style="left:1514px;top:605px;width:56px;height:17px;background:#ffffff"></div>
<div class="a" style="left:19px;top:622px;width:1571px;height:1px;background:#afafb5"></div>
<div class="cell r" style="left:19px;top:605px;width:39px">9</div>
<div class="cell" style="left:59px;top:605px;width:239px">Fach</div>
<div class="cell" style="left:301px;top:605px;width:295px">Chemie/Biochemie</div>
<div class="cell" style="left:599px;top:605px;width:135px">Pflichtunt</div>
<div class="cell r" style="left:741px;top:605px;width:39px">1</div>
<div class="cell r" style="left:786px;top:605px;width:39px">1</div>
<div class="cell r" style="left:831px;top:605px;width:39px">1</div>
<div class="cell r" style="left:876px;top:605px;width:39px">1</div>
<div class="cell" style="left:1370px;top:605px;width:69px">1-6</div>
<div class="cell" style="left:1442px;top:605px;width:69px">1-6</div>
<div class="cell" style="left:1514px;top:605px;width:55px">Wort</div>
<div class="cell" style="left:917px;top:605px;width:450px">Chemie und Biochemie</div>
<div class="a" style="left:1571px;top:605px;width:19px;height:17px;border:1px solid #1c3f7a;border-radius:3px;background:linear-gradient(#eef4fd,#9cb9e6)"></div><svg class="a" style="left:1571px;top:605px" width="19" height="17"><path d="M5.5 3.5 L14 12 M14 3.5 L5.5 12" stroke="#f44a58" stroke-width="3" stroke-linecap="round"/><circle cx="9.75" cy="7.75" r="1" fill="#ff8890"/></svg>
<div class="a" style="left:19px;top:623px;width:39px;height:17px;background:#cad9f5"></div>
<div class="a" style="left:59px;top:623px;width:241px;height:17px;background:#cad9f5"></div>
<div class="a" style="left:301px;top:623px;width:297px;height:17px;background:#cad9f5"></div>
<div class="a" style="left:599px;top:623px;width:137px;height:17px;background:#e9f0fd"></div>
<div class="a" style="left:737px;top:623px;width:44px;height:17px;background:#e9f0fd"></div>
<div class="a" style="left:782px;top:623px;width:44px;height:17px;background:#e9f0fd"></div>
<div class="a" style="left:827px;top:623px;width:44px;height:17px;background:#e9f0fd"></div>
<div class="a" style="left:872px;top:623px;width:44px;height:17px;background:#e9f0fd"></div>
<div class="a" style="left:917px;top:623px;width:452px;height:17px;background:#e9f0fd"></div>
<div class="a" style="left:1370px;top:623px;width:71px;height:17px;background:#e9f0fd"></div>
<div class="a" style="left:1442px;top:623px;width:71px;height:17px;background:#e9f0fd"></div>
<div class="a" style="left:1514px;top:623px;width:56px;height:17px;background:#e9f0fd"></div>
<div class="a" style="left:19px;top:640px;width:1571px;height:1px;background:#afafb5"></div>
<div class="cell r" style="left:19px;top:623px;width:39px">10</div>
<div class="cell" style="left:59px;top:623px;width:239px">Fach</div>
<div class="cell" style="left:301px;top:623px;width:295px">Biologie</div>
<div class="cell" style="left:599px;top:623px;width:135px">Pflichtunt</div>
<div class="cell r" style="left:741px;top:623px;width:39px">1</div>
<div class="cell r" style="left:786px;top:623px;width:39px">1</div>
<div class="cell r" style="left:831px;top:623px;width:39px">1</div>
<div class="cell r" style="left:876px;top:623px;width:39px">1</div>
<div class="cell" style="left:1370px;top:623px;width:69px">1-6</div>
<div class="cell" style="left:1442px;top:623px;width:69px">1-6</div>
<div class="cell" style="left:1514px;top:623px;width:55px">Wort</div>
<div class="cell" style="left:917px;top:623px;width:450px">Biologie</div>
<div class="a" style="left:1571px;top:623px;width:19px;height:17px;border:1px solid #1c3f7a;border-radius:3px;background:linear-gradient(#eef4fd,#9cb9e6)"></div><svg class="a" style="left:1571px;top:623px" width="19" height="17"><path d="M5.5 3.5 L14 12 M14 3.5 L5.5 12" stroke="#f44a58" stroke-width="3" stroke-linecap="round"/><circle cx="9.75" cy="7.75" r="1" fill="#ff8890"/></svg>
<div class="a" style="left:19px;top:641px;width:39px;height:17px;background:#e8e8f0"></div>
<div class="a" style="left:59px;top:641px;width:241px;height:17px;background:#e8e8f0"></div>
<div class="a" style="left:301px;top:641px;width:297px;height:17px;background:#e8e8f0"></div>
<div class="a" style="left:599px;top:641px;width:137px;height:17px;background:#ffffff"></div>
<div class="a" style="left:737px;top:641px;width:44px;height:17px;background:#ffffff"></div>
<div class="a" style="left:782px;top:641px;width:44px;height:17px;background:#ffffff"></div>
<div class="a" style="left:827px;top:641px;width:44px;height:17px;background:#ffffff"></div>
<div class="a" style="left:872px;top:641px;width:44px;height:17px;background:#ffffff"></div>
<div class="a" style="left:917px;top:641px;width:452px;height:17px;background:#ffffff"></div>
<div class="a" style="left:1370px;top:641px;width:71px;height:17px;background:#ffffff"></div>
<div class="a" style="left:1442px;top:641px;width:71px;height:17px;background:#ffffff"></div>
<div class="a" style="left:1514px;top:641px;width:56px;height:17px;background:#ffffff"></div>
<div class="a" style="left:19px;top:658px;width:1571px;height:1px;background:#afafb5"></div>
<div class="cell r" style="left:19px;top:641px;width:39px">11</div>
<div class="cell" style="left:59px;top:641px;width:239px">Fach</div>
<div class="cell" style="left:301px;top:641px;width:295px">Mikro-/Molekularbiol.</div>
<div class="cell" style="left:599px;top:641px;width:135px">Pflichtunt</div>
<div class="cell r" style="left:741px;top:641px;width:39px">1</div>
<div class="cell r" style="left:786px;top:641px;width:39px">1</div>
<div class="cell r" style="left:831px;top:641px;width:39px">1</div>
<div class="cell r" style="left:876px;top:641px;width:39px">1</div>
<div class="cell" style="left:1370px;top:641px;width:69px">1-6</div>
<div class="cell" style="left:1442px;top:641px;width:69px">1-6</div>
<div class="cell" style="left:1514px;top:641px;width:55px">Wort</div>
<div class="cell" style="left:917px;top:641px;width:450px">Mikro- und Molekularbiologie</div>
<div class="a" style="left:1571px;top:641px;width:19px;height:17px;border:1px solid #1c3f7a;border-radius:3px;background:linear-gradient(#eef4fd,#9cb9e6)"></div><svg class="a" style="left:1571px;top:641px" width="19" height="17"><path d="M5.5 3.5 L14 12 M14 3.5 L5.5 12" stroke="#f44a58" stroke-width="3" stroke-linecap="round"/><circle cx="9.75" cy="7.75" r="1" fill="#ff8890"/></svg>
<div class="a" style="left:19px;top:659px;width:39px;height:17px;background:#cad9f5"></div>
<div class="a" style="left:59px;top:659px;width:241px;height:17px;background:#cad9f5"></div>
<div class="a" style="left:301px;top:659px;width:297px;height:17px;background:#cad9f5"></div>
<div class="a" style="left:599px;top:659px;width:137px;height:17px;background:#e9f0fd"></div>
<div class="a" style="left:737px;top:659px;width:44px;height:17px;background:#e9f0fd"></div>
<div class="a" style="left:782px;top:659px;width:44px;height:17px;background:#e9f0fd"></div>
<div class="a" style="left:827px;top:659px;width:44px;height:17px;background:#e9f0fd"></div>
<div class="a" style="left:872px;top:659px;width:44px;height:17px;background:#e9f0fd"></div>
<div class="a" style="left:917px;top:659px;width:452px;height:17px;background:#e9f0fd"></div>
<div class="a" style="left:1370px;top:659px;width:71px;height:17px;background:#e9f0fd"></div>
<div class="a" style="left:1442px;top:659px;width:71px;height:17px;background:#e9f0fd"></div>
<div class="a" style="left:1514px;top:659px;width:56px;height:17px;background:#e9f0fd"></div>
<div class="a" style="left:19px;top:676px;width:1571px;height:1px;background:#afafb5"></div>
<div class="cell r" style="left:19px;top:659px;width:39px">12</div>
<div class="cell" style="left:59px;top:659px;width:239px">Fach</div>
<div class="cell" style="left:301px;top:659px;width:295px">Biol. / biot.Praktikum</div>
<div class="cell" style="left:599px;top:659px;width:135px">Pflichtunt</div>
<div class="cell r" style="left:741px;top:659px;width:39px">1</div>
<div class="cell r" style="left:786px;top:659px;width:39px">1</div>
<div class="cell r" style="left:831px;top:659px;width:39px">1</div>
<div class="cell r" style="left:876px;top:659px;width:39px">1</div>
<div class="cell" style="left:1370px;top:659px;width:69px">1-6</div>
<div class="cell" style="left:1442px;top:659px;width:69px">1-6</div>
<div class="cell" style="left:1514px;top:659px;width:55px">Wort</div>
<div class="cell" style="left:917px;top:659px;width:450px">Biologisches und biotechnologisches Praktikum</div>
<div class="a" style="left:1571px;top:659px;width:19px;height:17px;border:1px solid #1c3f7a;border-radius:3px;background:linear-gradient(#eef4fd,#9cb9e6)"></div><svg class="a" style="left:1571px;top:659px" width="19" height="17"><path d="M5.5 3.5 L14 12 M14 3.5 L5.5 12" stroke="#f44a58" stroke-width="3" stroke-linecap="round"/><circle cx="9.75" cy="7.75" r="1" fill="#ff8890"/></svg>
<div class="a" style="left:19px;top:677px;width:39px;height:17px;background:#e8e8f0"></div>
<div class="a" style="left:59px;top:677px;width:241px;height:17px;background:#e8e8f0"></div>
<div class="a" style="left:301px;top:677px;width:297px;height:17px;background:#e8e8f0"></div>
<div class="a" style="left:599px;top:677px;width:137px;height:17px;background:#ffffff"></div>
<div class="a" style="left:737px;top:677px;width:44px;height:17px;background:#ffffff"></div>
<div class="a" style="left:782px;top:677px;width:44px;height:17px;background:#ffffff"></div>
<div class="a" style="left:827px;top:677px;width:44px;height:17px;background:#ffffff"></div>
<div class="a" style="left:872px;top:677px;width:44px;height:17px;background:#ffffff"></div>
<div class="a" style="left:917px;top:677px;width:452px;height:17px;background:#ffffff"></div>
<div class="a" style="left:1370px;top:677px;width:71px;height:17px;background:#ffffff"></div>
<div class="a" style="left:1442px;top:677px;width:71px;height:17px;background:#ffffff"></div>
<div class="a" style="left:1514px;top:677px;width:56px;height:17px;background:#ffffff"></div>
<div class="a" style="left:19px;top:694px;width:1571px;height:1px;background:#afafb5"></div>
<div class="cell r" style="left:19px;top:677px;width:39px">13</div>
<div class="cell" style="left:59px;top:677px;width:239px">Fach</div>
<div class="cell" style="left:301px;top:677px;width:295px">Projektarbeit</div>
<div class="cell" style="left:599px;top:677px;width:135px">Pflichtunt</div>
<div class="cell r" style="left:741px;top:677px;width:39px">1</div>
<div class="cell r" style="left:786px;top:677px;width:39px">1</div>
<div class="cell r" style="left:831px;top:677px;width:39px">1</div>
<div class="cell r" style="left:876px;top:677px;width:39px">1</div>
<div class="cell" style="left:1370px;top:677px;width:69px">1-6</div>
<div class="cell" style="left:1442px;top:677px;width:69px">1-6</div>
<div class="cell" style="left:1514px;top:677px;width:55px">Wort</div>
<div class="cell" style="left:917px;top:677px;width:450px">Projektarbeit</div>
<div class="a" style="left:1571px;top:677px;width:19px;height:17px;border:1px solid #1c3f7a;border-radius:3px;background:linear-gradient(#eef4fd,#9cb9e6)"></div><svg class="a" style="left:1571px;top:677px" width="19" height="17"><path d="M5.5 3.5 L14 12 M14 3.5 L5.5 12" stroke="#f44a58" stroke-width="3" stroke-linecap="round"/><circle cx="9.75" cy="7.75" r="1" fill="#ff8890"/></svg>
<div class="a" style="left:19px;top:695px;width:39px;height:17px;background:#cad9f5"></div>
<div class="a" style="left:59px;top:695px;width:241px;height:17px;background:#cad9f5"></div>
<div class="a" style="left:301px;top:695px;width:297px;height:17px;background:#cad9f5"></div>
<div class="a" style="left:599px;top:695px;width:137px;height:17px;background:#e9f0fd"></div>
<div class="a" style="left:737px;top:695px;width:44px;height:17px;background:#e9f0fd"></div>
<div class="a" style="left:782px;top:695px;width:44px;height:17px;background:#e9f0fd"></div>
<div class="a" style="left:827px;top:695px;width:44px;height:17px;background:#e9f0fd"></div>
<div class="a" style="left:872px;top:695px;width:44px;height:17px;background:#e9f0fd"></div>
<div class="a" style="left:917px;top:695px;width:452px;height:17px;background:#e9f0fd"></div>
<div class="a" style="left:1370px;top:695px;width:71px;height:17px;background:#e9f0fd"></div>
<div class="a" style="left:1442px;top:695px;width:71px;height:17px;background:#e9f0fd"></div>
<div class="a" style="left:1514px;top:695px;width:56px;height:17px;background:#e9f0fd"></div>
<div class="a" style="left:19px;top:712px;width:1571px;height:1px;background:#afafb5"></div>
<div class="cell r" style="left:19px;top:695px;width:39px">14</div>
<div class="cell" style="left:59px;top:695px;width:239px">Fach</div>
<div class="cell" style="left:301px;top:695px;width:295px">Phys. /chem. / biochem.Prakt.</div>
<div class="cell" style="left:599px;top:695px;width:135px">Pflichtunt</div>
<div class="cell r" style="left:741px;top:695px;width:39px">1</div>
<div class="cell r" style="left:786px;top:695px;width:39px">1</div>
<div class="cell r" style="left:831px;top:695px;width:39px">1</div>
<div class="cell r" style="left:876px;top:695px;width:39px">1</div>
<div class="cell" style="left:1370px;top:695px;width:69px">1-6</div>
<div class="cell" style="left:1442px;top:695px;width:69px">1-6</div>
<div class="cell" style="left:1514px;top:695px;width:55px">Wort</div>
<div class="cell" style="left:917px;top:695px;width:450px">Physikalisches, chemisches und biochemisches Praktikum</div>
<div class="a" style="left:1571px;top:695px;width:19px;height:17px;border:1px solid #1c3f7a;border-radius:3px;background:linear-gradient(#eef4fd,#9cb9e6)"></div><svg class="a" style="left:1571px;top:695px" width="19" height="17"><path d="M5.5 3.5 L14 12 M14 3.5 L5.5 12" stroke="#f44a58" stroke-width="3" stroke-linecap="round"/><circle cx="9.75" cy="7.75" r="1" fill="#ff8890"/></svg>
<div class="a" style="left:19px;top:713px;width:39px;height:17px;background:#e8e8f0"></div>
<div class="a" style="left:59px;top:713px;width:241px;height:17px;background:#e8e8f0"></div>
<div class="a" style="left:301px;top:713px;width:297px;height:17px;background:#e8e8f0"></div>
<div class="a" style="left:599px;top:713px;width:137px;height:17px;background:#ffffff"></div>
<div class="a" style="left:737px;top:713px;width:44px;height:17px;background:#ffffff"></div>
<div class="a" style="left:782px;top:713px;width:44px;height:17px;background:#ffffff"></div>
<div class="a" style="left:827px;top:713px;width:44px;height:17px;background:#ffffff"></div>
<div class="a" style="left:872px;top:713px;width:44px;height:17px;background:#ffffff"></div>
<div class="a" style="left:917px;top:713px;width:452px;height:17px;background:#ffffff"></div>
<div class="a" style="left:1370px;top:713px;width:71px;height:17px;background:#ffffff"></div>
<div class="a" style="left:1442px;top:713px;width:71px;height:17px;background:#ffffff"></div>
<div class="a" style="left:1514px;top:713px;width:56px;height:17px;background:#ffffff"></div>
<div class="a" style="left:19px;top:730px;width:1571px;height:1px;background:#afafb5"></div>
<div class="cell r" style="left:19px;top:713px;width:39px">15</div>
<div class="cell" style="left:59px;top:713px;width:239px">Fach</div>
<div class="cell" style="left:301px;top:713px;width:295px">Molekularbiol. Praktikum</div>
<div class="cell" style="left:599px;top:713px;width:135px">Pflichtunt</div>
<div class="cell r" style="left:741px;top:713px;width:39px">1</div>
<div class="cell r" style="left:786px;top:713px;width:39px">1</div>
<div class="cell r" style="left:831px;top:713px;width:39px">1</div>
<div class="cell r" style="left:876px;top:713px;width:39px">1</div>
<div class="cell" style="left:1370px;top:713px;width:69px">1-6</div>
<div class="cell" style="left:1442px;top:713px;width:69px">1-6</div>
<div class="cell" style="left:1514px;top:713px;width:55px">Wort</div>
<div class="cell" style="left:917px;top:713px;width:450px">Molekularbiologisches Praktikum</div>
<div class="a" style="left:1571px;top:713px;width:19px;height:17px;border:1px solid #1c3f7a;border-radius:3px;background:linear-gradient(#eef4fd,#9cb9e6)"></div><svg class="a" style="left:1571px;top:713px" width="19" height="17"><path d="M5.5 3.5 L14 12 M14 3.5 L5.5 12" stroke="#f44a58" stroke-width="3" stroke-linecap="round"/><circle cx="9.75" cy="7.75" r="1" fill="#ff8890"/></svg>
<div class="a" style="left:19px;top:731px;width:39px;height:17px;background:#cad9f5"></div>
<div class="a" style="left:59px;top:731px;width:241px;height:17px;background:#cad9f5"></div>
<div class="a" style="left:301px;top:731px;width:297px;height:17px;background:#cad9f5"></div>
<div class="a" style="left:599px;top:731px;width:137px;height:17px;background:#e9f0fd"></div>
<div class="a" style="left:737px;top:731px;width:44px;height:17px;background:#e9f0fd"></div>
<div class="a" style="left:782px;top:731px;width:44px;height:17px;background:#e9f0fd"></div>
<div class="a" style="left:827px;top:731px;width:44px;height:17px;background:#e9f0fd"></div>
<div class="a" style="left:872px;top:731px;width:44px;height:17px;background:#e9f0fd"></div>
<div class="a" style="left:917px;top:731px;width:452px;height:17px;background:#e9f0fd"></div>
<div class="a" style="left:1370px;top:731px;width:71px;height:17px;background:#e9f0fd"></div>
<div class="a" style="left:1442px;top:731px;width:71px;height:17px;background:#e9f0fd"></div>
<div class="a" style="left:1514px;top:731px;width:56px;height:17px;background:#e9f0fd"></div>
<div class="a" style="left:19px;top:748px;width:1571px;height:1px;background:#afafb5"></div>
<div class="cell r" style="left:19px;top:731px;width:39px">16</div>
<div class="cell" style="left:59px;top:731px;width:239px">Fach</div>
<div class="cell" style="left:301px;top:731px;width:295px">Deutsch II</div>
<div class="cell" style="left:599px;top:731px;width:135px">Wahlunt</div>
<div class="cell r" style="left:741px;top:731px;width:39px">1</div>
<div class="cell r" style="left:786px;top:731px;width:39px">1</div>
<div class="cell r" style="left:831px;top:731px;width:39px">1</div>
<div class="cell r" style="left:876px;top:731px;width:39px">1</div>
<div class="cell" style="left:1370px;top:731px;width:69px">1-6</div>
<div class="cell" style="left:1442px;top:731px;width:69px">1-6</div>
<div class="cell" style="left:1514px;top:731px;width:55px">Wort</div>
<div class="cell" style="left:917px;top:731px;width:450px">Deutsch II</div>
<div class="a" style="left:1571px;top:731px;width:19px;height:17px;border:1px solid #1c3f7a;border-radius:3px;background:linear-gradient(#eef4fd,#9cb9e6)"></div><svg class="a" style="left:1571px;top:731px" width="19" height="17"><path d="M5.5 3.5 L14 12 M14 3.5 L5.5 12" stroke="#f44a58" stroke-width="3" stroke-linecap="round"/><circle cx="9.75" cy="7.75" r="1" fill="#ff8890"/></svg>
<div class="a" style="left:19px;top:749px;width:39px;height:17px;background:#e8e8f0"></div>
<div class="a" style="left:59px;top:749px;width:241px;height:17px;background:#e8e8f0"></div>
<div class="a" style="left:301px;top:749px;width:297px;height:17px;background:#e8e8f0"></div>
<div class="a" style="left:599px;top:749px;width:137px;height:17px;background:#ffffff"></div>
<div class="a" style="left:737px;top:749px;width:44px;height:17px;background:#ffffff"></div>
<div class="a" style="left:782px;top:749px;width:44px;height:17px;background:#ffffff"></div>
<div class="a" style="left:827px;top:749px;width:44px;height:17px;background:#ffffff"></div>
<div class="a" style="left:872px;top:749px;width:44px;height:17px;background:#ffffff"></div>
<div class="a" style="left:917px;top:749px;width:452px;height:17px;background:#ffffff"></div>
<div class="a" style="left:1370px;top:749px;width:71px;height:17px;background:#ffffff"></div>
<div class="a" style="left:1442px;top:749px;width:71px;height:17px;background:#ffffff"></div>
<div class="a" style="left:1514px;top:749px;width:56px;height:17px;background:#ffffff"></div>
<div class="a" style="left:19px;top:766px;width:1571px;height:1px;background:#afafb5"></div>
<div class="cell r" style="left:19px;top:749px;width:39px">17</div>
<div class="cell" style="left:59px;top:749px;width:239px">Fach</div>
<div class="cell" style="left:301px;top:749px;width:295px">Englisch II</div>
<div class="cell" style="left:599px;top:749px;width:135px">Wahlunt</div>
<div class="cell r" style="left:741px;top:749px;width:39px">1</div>
<div class="cell r" style="left:786px;top:749px;width:39px">1</div>
<div class="cell r" style="left:831px;top:749px;width:39px">1</div>
<div class="cell r" style="left:876px;top:749px;width:39px">1</div>
<div class="cell" style="left:1370px;top:749px;width:69px">1-6</div>
<div class="cell" style="left:1442px;top:749px;width:69px">1-6</div>
<div class="cell" style="left:1514px;top:749px;width:55px">Wort</div>
<div class="cell" style="left:917px;top:749px;width:450px">Englisch II</div>
<div class="a" style="left:1571px;top:749px;width:19px;height:17px;border:1px solid #1c3f7a;border-radius:3px;background:linear-gradient(#eef4fd,#9cb9e6)"></div><svg class="a" style="left:1571px;top:749px" width="19" height="17"><path d="M5.5 3.5 L14 12 M14 3.5 L5.5 12" stroke="#f44a58" stroke-width="3" stroke-linecap="round"/><circle cx="9.75" cy="7.75" r="1" fill="#ff8890"/></svg>
<div class="a" style="left:19px;top:767px;width:39px;height:17px;background:#cad9f5"></div>
<div class="a" style="left:59px;top:767px;width:241px;height:17px;background:#cad9f5"></div>
<div class="a" style="left:301px;top:767px;width:297px;height:17px;background:#cad9f5"></div>
<div class="a" style="left:599px;top:767px;width:137px;height:17px;background:#e9f0fd"></div>
<div class="a" style="left:737px;top:767px;width:44px;height:17px;background:#e9f0fd"></div>
<div class="a" style="left:782px;top:767px;width:44px;height:17px;background:#e9f0fd"></div>
<div class="a" style="left:827px;top:767px;width:44px;height:17px;background:#e9f0fd"></div>
<div class="a" style="left:872px;top:767px;width:44px;height:17px;background:#e9f0fd"></div>
<div class="a" style="left:917px;top:767px;width:452px;height:17px;background:#e9f0fd"></div>
<div class="a" style="left:1370px;top:767px;width:71px;height:17px;background:#e9f0fd"></div>
<div class="a" style="left:1442px;top:767px;width:71px;height:17px;background:#e9f0fd"></div>
<div class="a" style="left:1514px;top:767px;width:56px;height:17px;background:#e9f0fd"></div>
<div class="a" style="left:19px;top:784px;width:1571px;height:1px;background:#afafb5"></div>
<div class="cell r" style="left:19px;top:767px;width:39px">18</div>
<div class="cell" style="left:59px;top:767px;width:239px">Fach</div>
<div class="cell" style="left:301px;top:767px;width:295px">Mathematik II</div>
<div class="cell" style="left:599px;top:767px;width:135px">Wahlunt</div>
<div class="cell r" style="left:741px;top:767px;width:39px">1</div>
<div class="cell r" style="left:786px;top:767px;width:39px">1</div>
<div class="cell r" style="left:831px;top:767px;width:39px">1</div>
<div class="cell r" style="left:876px;top:767px;width:39px">1</div>
<div class="cell" style="left:1370px;top:767px;width:69px">1-6</div>
<div class="cell" style="left:1442px;top:767px;width:69px">1-6</div>
<div class="cell" style="left:1514px;top:767px;width:55px">Wort</div>
<div class="cell" style="left:917px;top:767px;width:450px">Mathematik II</div>
<div class="a" style="left:1571px;top:767px;width:19px;height:17px;border:1px solid #1c3f7a;border-radius:3px;background:linear-gradient(#eef4fd,#9cb9e6)"></div><svg class="a" style="left:1571px;top:767px" width="19" height="17"><path d="M5.5 3.5 L14 12 M14 3.5 L5.5 12" stroke="#f44a58" stroke-width="3" stroke-linecap="round"/><circle cx="9.75" cy="7.75" r="1" fill="#ff8890"/></svg>
<div class="a" style="left:19px;top:785px;width:39px;height:17px;background:#e8e8f0"></div>
<div class="a" style="left:59px;top:785px;width:241px;height:17px;background:#ffffff"></div>
<div class="a" style="left:301px;top:785px;width:297px;height:17px;background:#ffffff"></div>
<div class="a" style="left:599px;top:785px;width:137px;height:17px;background:#e8e8f0"></div>
<div class="a" style="left:737px;top:785px;width:44px;height:17px;background:#e8e8f0"></div>
<div class="a" style="left:782px;top:785px;width:44px;height:17px;background:#e8e8f0"></div>
<div class="a" style="left:827px;top:785px;width:44px;height:17px;background:#e8e8f0"></div>
<div class="a" style="left:872px;top:785px;width:44px;height:17px;background:#e8e8f0"></div>
<div class="a" style="left:917px;top:785px;width:452px;height:17px;background:#ffffff"></div>
<div class="a" style="left:1370px;top:785px;width:71px;height:17px;background:#e8e8f0"></div>
<div class="a" style="left:1442px;top:785px;width:71px;height:17px;background:#e8e8f0"></div>
<div class="a" style="left:1514px;top:785px;width:56px;height:17px;background:#e8e8f0"></div>
<div class="a" style="left:19px;top:802px;width:1571px;height:1px;background:#afafb5"></div>
<div class="cell r" style="left:19px;top:785px;width:39px">19</div>
<div class="cell" style="left:59px;top:785px;width:239px">Bemerkungen</div>
<div class="cell" style="left:301px;top:785px;width:295px">Bemerkungen</div>
<div class="cell" style="left:599px;top:785px;width:135px"></div>
<div class="cell" style="left:917px;top:785px;width:450px">Bemerkungen</div>
<div class="a" style="left:1571px;top:785px;width:19px;height:17px;border:1px solid #1c3f7a;border-radius:3px;background:linear-gradient(#eef4fd,#9cb9e6)"></div><svg class="a" style="left:1571px;top:785px" width="19" height="17"><path d="M5.5 3.5 L14 12 M14 3.5 L5.5 12" stroke="#f44a58" stroke-width="3" stroke-linecap="round"/><circle cx="9.75" cy="7.75" r="1" fill="#ff8890"/></svg>
<div class="a" style="left:19px;top:803px;width:39px;height:17px;background:#cad9f5"></div>
<div class="a" style="left:59px;top:803px;width:241px;height:17px;background:#e9f0fd"></div>
<div class="a" style="left:301px;top:803px;width:297px;height:17px;background:#e9f0fd"></div>
<div class="a" style="left:599px;top:803px;width:137px;height:17px;background:#cad9f5"></div>
<div class="a" style="left:737px;top:803px;width:44px;height:17px;background:#cad9f5"></div>
<div class="a" style="left:782px;top:803px;width:44px;height:17px;background:#cad9f5"></div>
<div class="a" style="left:827px;top:803px;width:44px;height:17px;background:#cad9f5"></div>
<div class="a" style="left:872px;top:803px;width:44px;height:17px;background:#cad9f5"></div>
<div class="a" style="left:917px;top:803px;width:452px;height:17px;background:#e9f0fd"></div>
<div class="a" style="left:1370px;top:803px;width:71px;height:17px;background:#cad9f5"></div>
<div class="a" style="left:1442px;top:803px;width:71px;height:17px;background:#cad9f5"></div>
<div class="a" style="left:1514px;top:803px;width:56px;height:17px;background:#cad9f5"></div>
<div class="a" style="left:19px;top:820px;width:1571px;height:1px;background:#afafb5"></div>
<div class="cell r" style="left:19px;top:803px;width:39px">20</div>
<div class="cell" style="left:59px;top:803px;width:239px">wiederholt</div>
<div class="cell" style="left:301px;top:803px;width:295px">wiederholt</div>
<div class="cell" style="left:599px;top:803px;width:135px"></div>
<div class="cell" style="left:917px;top:803px;width:450px">wiederholt</div>
<div class="a" style="left:1571px;top:803px;width:19px;height:17px;border:1px solid #1c3f7a;border-radius:3px;background:linear-gradient(#eef4fd,#9cb9e6)"></div><svg class="a" style="left:1571px;top:803px" width="19" height="17"><path d="M5.5 3.5 L14 12 M14 3.5 L5.5 12" stroke="#f44a58" stroke-width="3" stroke-linecap="round"/><circle cx="9.75" cy="7.75" r="1" fill="#ff8890"/></svg>
<div class="a" style="left:19px;top:821px;width:39px;height:17px;background:#e8e8f0"></div>
<div class="a" style="left:59px;top:821px;width:241px;height:17px;background:#ffffff"></div>
<div class="a" style="left:301px;top:821px;width:297px;height:17px;background:#ffffff"></div>
<div class="a" style="left:599px;top:821px;width:137px;height:17px;background:#e8e8f0"></div>
<div class="a" style="left:737px;top:821px;width:44px;height:17px;background:#e8e8f0"></div>
<div class="a" style="left:782px;top:821px;width:44px;height:17px;background:#e8e8f0"></div>
<div class="a" style="left:827px;top:821px;width:44px;height:17px;background:#e8e8f0"></div>
<div class="a" style="left:872px;top:821px;width:44px;height:17px;background:#e8e8f0"></div>
<div class="a" style="left:917px;top:821px;width:452px;height:17px;background:#ffffff"></div>
<div class="a" style="left:1370px;top:821px;width:71px;height:17px;background:#e8e8f0"></div>
<div class="a" style="left:1442px;top:821px;width:71px;height:17px;background:#e8e8f0"></div>
<div class="a" style="left:1514px;top:821px;width:56px;height:17px;background:#e8e8f0"></div>
<div class="a" style="left:19px;top:838px;width:1571px;height:1px;background:#afafb5"></div>
<div class="cell r" style="left:19px;top:821px;width:39px">21</div>
<div class="cell" style="left:59px;top:821px;width:239px">bestanden</div>
<div class="cell" style="left:301px;top:821px;width:295px">bestanden</div>
<div class="cell" style="left:599px;top:821px;width:135px"></div>
<div class="cell" style="left:917px;top:821px;width:450px">bestanden</div>
<div class="a" style="left:1571px;top:821px;width:19px;height:17px;border:1px solid #1c3f7a;border-radius:3px;background:linear-gradient(#eef4fd,#9cb9e6)"></div><svg class="a" style="left:1571px;top:821px" width="19" height="17"><path d="M5.5 3.5 L14 12 M14 3.5 L5.5 12" stroke="#f44a58" stroke-width="3" stroke-linecap="round"/><circle cx="9.75" cy="7.75" r="1" fill="#ff8890"/></svg>
<div class="a" style="left:19px;top:839px;width:39px;height:17px;background:#cad9f5"></div>
<div class="a" style="left:59px;top:839px;width:241px;height:17px;background:#e9f0fd"></div>
<div class="a" style="left:301px;top:839px;width:297px;height:17px;background:#e9f0fd"></div>
<div class="a" style="left:599px;top:839px;width:137px;height:17px;background:#cad9f5"></div>
<div class="a" style="left:737px;top:839px;width:44px;height:17px;background:#cad9f5"></div>
<div class="a" style="left:782px;top:839px;width:44px;height:17px;background:#cad9f5"></div>
<div class="a" style="left:827px;top:839px;width:44px;height:17px;background:#cad9f5"></div>
<div class="a" style="left:872px;top:839px;width:44px;height:17px;background:#cad9f5"></div>
<div class="a" style="left:917px;top:839px;width:452px;height:17px;background:#e9f0fd"></div>
<div class="a" style="left:1370px;top:839px;width:71px;height:17px;background:#cad9f5"></div>
<div class="a" style="left:1442px;top:839px;width:71px;height:17px;background:#cad9f5"></div>
<div class="a" style="left:1514px;top:839px;width:56px;height:17px;background:#cad9f5"></div>
<div class="a" style="left:19px;top:856px;width:1571px;height:1px;background:#afafb5"></div>
<div class="cell r" style="left:19px;top:839px;width:39px">22</div>
<div class="cell" style="left:59px;top:839px;width:239px">Zusatzprüfung</div>
<div class="cell" style="left:301px;top:839px;width:295px">Zusatzprüfung</div>
<div class="cell" style="left:599px;top:839px;width:135px"></div>
<div class="cell" style="left:917px;top:839px;width:450px">Zusatzprüfung</div>
<div class="a" style="left:1571px;top:839px;width:19px;height:17px;border:1px solid #1c3f7a;border-radius:3px;background:linear-gradient(#eef4fd,#9cb9e6)"></div><svg class="a" style="left:1571px;top:839px" width="19" height="17"><path d="M5.5 3.5 L14 12 M14 3.5 L5.5 12" stroke="#f44a58" stroke-width="3" stroke-linecap="round"/><circle cx="9.75" cy="7.75" r="1" fill="#ff8890"/></svg>
<div class="a" style="left:19px;top:857px;width:39px;height:17px;background:#e8e8f0"></div>
<div class="a" style="left:59px;top:857px;width:241px;height:17px;background:#ffffff"></div>
<div class="a" style="left:301px;top:857px;width:297px;height:17px;background:#ffffff"></div>
<div class="a" style="left:599px;top:857px;width:137px;height:17px;background:#e8e8f0"></div>
<div class="a" style="left:737px;top:857px;width:44px;height:17px;background:#e8e8f0"></div>
<div class="a" style="left:782px;top:857px;width:44px;height:17px;background:#e8e8f0"></div>
<div class="a" style="left:827px;top:857px;width:44px;height:17px;background:#e8e8f0"></div>
<div class="a" style="left:872px;top:857px;width:44px;height:17px;background:#e8e8f0"></div>
<div class="a" style="left:917px;top:857px;width:452px;height:17px;background:#ffffff"></div>
<div class="a" style="left:1370px;top:857px;width:71px;height:17px;background:#e8e8f0"></div>
<div class="a" style="left:1442px;top:857px;width:71px;height:17px;background:#e8e8f0"></div>
<div class="a" style="left:1514px;top:857px;width:56px;height:17px;background:#e8e8f0"></div>
<div class="a" style="left:19px;top:874px;width:1571px;height:1px;background:#afafb5"></div>
<div class="cell r" style="left:19px;top:857px;width:39px">23</div>
<div class="cell" style="left:59px;top:857px;width:239px">Lob / Preis</div>
<div class="cell" style="left:301px;top:857px;width:295px">Lob / Preis</div>
<div class="cell" style="left:599px;top:857px;width:135px"></div>
<div class="cell" style="left:917px;top:857px;width:450px">Lob / Preis</div>
<div class="a" style="left:1571px;top:857px;width:19px;height:17px;border:1px solid #1c3f7a;border-radius:3px;background:linear-gradient(#eef4fd,#9cb9e6)"></div><svg class="a" style="left:1571px;top:857px" width="19" height="17"><path d="M5.5 3.5 L14 12 M14 3.5 L5.5 12" stroke="#f44a58" stroke-width="3" stroke-linecap="round"/><circle cx="9.75" cy="7.75" r="1" fill="#ff8890"/></svg>
<div class="a" style="left:19px;top:875px;width:39px;height:17px;background:#cad9f5"></div>
<div class="a" style="left:59px;top:875px;width:241px;height:17px;background:#e9f0fd"></div>
<div class="a" style="left:301px;top:875px;width:297px;height:17px;background:#e9f0fd"></div>
<div class="a" style="left:599px;top:875px;width:137px;height:17px;background:#cad9f5"></div>
<div class="a" style="left:737px;top:875px;width:44px;height:17px;background:#cad9f5"></div>
<div class="a" style="left:782px;top:875px;width:44px;height:17px;background:#cad9f5"></div>
<div class="a" style="left:827px;top:875px;width:44px;height:17px;background:#cad9f5"></div>
<div class="a" style="left:872px;top:875px;width:44px;height:17px;background:#cad9f5"></div>
<div class="a" style="left:917px;top:875px;width:452px;height:17px;background:#e9f0fd"></div>
<div class="a" style="left:1370px;top:875px;width:71px;height:17px;background:#cad9f5"></div>
<div class="a" style="left:1442px;top:875px;width:71px;height:17px;background:#cad9f5"></div>
<div class="a" style="left:1514px;top:875px;width:56px;height:17px;background:#cad9f5"></div>
<div class="a" style="left:19px;top:892px;width:1571px;height:1px;background:#afafb5"></div>
<div class="cell r" style="left:19px;top:875px;width:39px">24</div>
<div class="cell" style="left:59px;top:875px;width:239px">Durchschnitt 1</div>
<div class="cell" style="left:301px;top:875px;width:295px">Lob / Preis</div>
<div class="cell" style="left:599px;top:875px;width:135px"></div>
<div class="cell" style="left:917px;top:875px;width:450px">Durchschnitt 1</div>
<div class="a" style="left:1571px;top:875px;width:19px;height:17px;border:1px solid #1c3f7a;border-radius:3px;background:linear-gradient(#eef4fd,#9cb9e6)"></div><svg class="a" style="left:1571px;top:875px" width="19" height="17"><path d="M5.5 3.5 L14 12 M14 3.5 L5.5 12" stroke="#f44a58" stroke-width="3" stroke-linecap="round"/><circle cx="9.75" cy="7.75" r="1" fill="#ff8890"/></svg>
<div class="a" style="left:19px;top:893px;width:39px;height:17px;background:#e8e8f0"></div>
<div class="a" style="left:59px;top:893px;width:241px;height:17px;background:#ffffff"></div>
<div class="a" style="left:301px;top:893px;width:297px;height:17px;background:#ffffff"></div>
<div class="a" style="left:599px;top:893px;width:137px;height:17px;background:#e8e8f0"></div>
<div class="a" style="left:737px;top:893px;width:44px;height:17px;background:#e8e8f0"></div>
<div class="a" style="left:782px;top:893px;width:44px;height:17px;background:#e8e8f0"></div>
<div class="a" style="left:827px;top:893px;width:44px;height:17px;background:#e8e8f0"></div>
<div class="a" style="left:872px;top:893px;width:44px;height:17px;background:#e8e8f0"></div>
<div class="a" style="left:917px;top:893px;width:452px;height:17px;background:#ffffff"></div>
<div class="a" style="left:1370px;top:893px;width:71px;height:17px;background:#e8e8f0"></div>
<div class="a" style="left:1442px;top:893px;width:71px;height:17px;background:#e8e8f0"></div>
<div class="a" style="left:1514px;top:893px;width:56px;height:17px;background:#e8e8f0"></div>
<div class="a" style="left:19px;top:910px;width:1571px;height:1px;background:#afafb5"></div>
<div class="cell r" style="left:19px;top:893px;width:39px">25</div>
<div class="cell" style="left:59px;top:893px;width:239px">Durchschnitt 3</div>
<div class="cell" style="left:301px;top:893px;width:295px">Durchschnitt 3</div>
<div class="cell" style="left:599px;top:893px;width:135px"></div>
<div class="cell" style="left:917px;top:893px;width:450px">Durchschnitt 3</div>
<div class="a" style="left:1571px;top:893px;width:19px;height:17px;border:1px solid #1c3f7a;border-radius:3px;background:linear-gradient(#eef4fd,#9cb9e6)"></div><svg class="a" style="left:1571px;top:893px" width="19" height="17"><path d="M5.5 3.5 L14 12 M14 3.5 L5.5 12" stroke="#f44a58" stroke-width="3" stroke-linecap="round"/><circle cx="9.75" cy="7.75" r="1" fill="#ff8890"/></svg>
<div class="a" style="left:19px;top:911px;width:39px;height:17px;background:#cad9f5"></div>
<div class="a" style="left:59px;top:911px;width:241px;height:17px;background:#cad9f5"></div>
<div class="a" style="left:301px;top:911px;width:297px;height:17px;background:#cad9f5"></div>
<div class="a" style="left:599px;top:911px;width:137px;height:17px;background:#cad9f5"></div>
<div class="a" style="left:737px;top:911px;width:44px;height:17px;background:#cad9f5"></div>
<div class="a" style="left:782px;top:911px;width:44px;height:17px;background:#cad9f5"></div>
<div class="a" style="left:827px;top:911px;width:44px;height:17px;background:#cad9f5"></div>
<div class="a" style="left:872px;top:911px;width:44px;height:17px;background:#cad9f5"></div>
<div class="a" style="left:917px;top:911px;width:452px;height:17px;background:#cad9f5"></div>
<div class="a" style="left:1370px;top:911px;width:71px;height:17px;background:#cad9f5"></div>
<div class="a" style="left:1442px;top:911px;width:71px;height:17px;background:#cad9f5"></div>
<div class="a" style="left:1514px;top:911px;width:56px;height:17px;background:#cad9f5"></div>
<div class="a" style="left:19px;top:928px;width:1571px;height:1px;background:#afafb5"></div>
<div class="a" style="left:1571px;top:911px;width:19px;height:17px;border:1px solid #d0d0d8;border-radius:3px;background:linear-gradient(#ffffff,#ececf0)"></div><svg class="a" style="left:1571px;top:911px" width="19" height="17"><path d="M5.5 3.5 L14 12 M14 3.5 L5.5 12" stroke="#8c8c8c" stroke-width="3.4" stroke-linecap="round"/></svg>
<div class="a" style="left:58px;top:461px;width:1px;height:468px;background:#afafb5"></div>
<div class="a" style="left:300px;top:461px;width:1px;height:468px;background:#afafb5"></div>
<div class="a" style="left:598px;top:461px;width:1px;height:468px;background:#afafb5"></div>
<div class="a" style="left:736px;top:461px;width:1px;height:468px;background:#afafb5"></div>
<div class="a" style="left:781px;top:461px;width:1px;height:468px;background:#afafb5"></div>
<div class="a" style="left:826px;top:461px;width:1px;height:468px;background:#afafb5"></div>
<div class="a" style="left:871px;top:461px;width:1px;height:468px;background:#afafb5"></div>
<div class="a" style="left:916px;top:461px;width:1px;height:468px;background:#afafb5"></div>
<div class="a" style="left:1369px;top:461px;width:1px;height:468px;background:#afafb5"></div>
<div class="a" style="left:1441px;top:461px;width:1px;height:468px;background:#afafb5"></div>
<div class="a" style="left:1513px;top:461px;width:1px;height:468px;background:#afafb5"></div>
<div class="a" style="left:1570px;top:461px;width:1px;height:468px;background:#afafb5"></div>
<div class="a" style="left:1590px;top:461px;width:1px;height:468px;background:#afafb5"></div>
<div class="a" style="left:19px;top:928px;width:1572px;height:1px;background:#a8a8b0"></div>
<div class="a" style="left:1591px;top:461px;width:17px;height:480px;background:#fbfbfe"></div>
<div class="a" style="left:1593px;top:461px;width:13px;height:16px;background:linear-gradient(#f4f4f6,#e4e4e8)"></div><svg class="a" style="left:1593px;top:461px" width="13" height="16"><path d="M2.5 9.5 L6.5 5.5 L10.5 9.5" stroke="#c4c4c8" stroke-width="2" fill="none"/></svg>
</body></html>
